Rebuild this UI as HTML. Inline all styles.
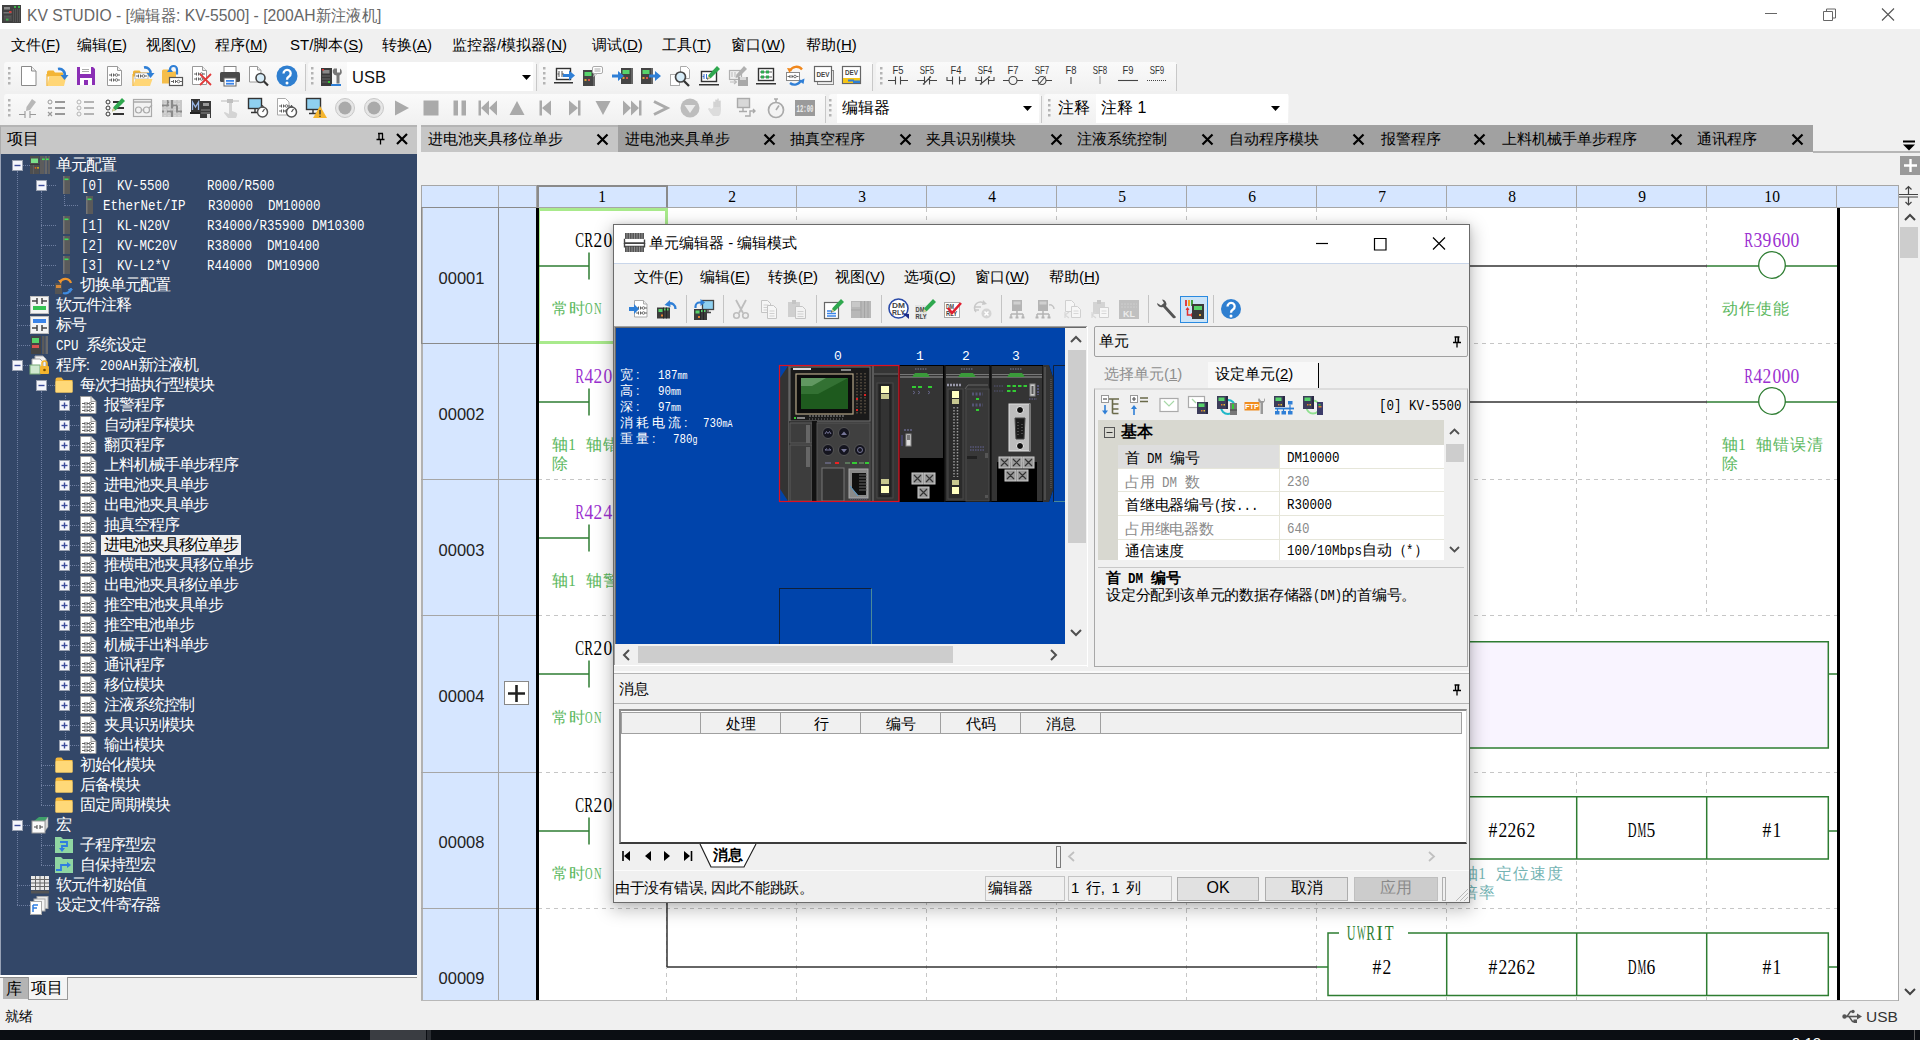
<!DOCTYPE html>
<html><head><meta charset="utf-8"><title>KV STUDIO</title><style>
*{box-sizing:border-box;margin:0;padding:0}
html,body{width:1920px;height:1040px;overflow:hidden;background:#f0f0f0;font-family:"Liberation Sans",sans-serif;font-size:15px;color:#000}
div,svg{position:absolute}
svg{overflow:visible}
.t{white-space:nowrap;line-height:1}
.s{font-family:"Liberation Serif",serif}
.m{font-family:"Liberation Mono",monospace}
u{text-decoration:underline;text-underline-offset:1px}
</style></head><body>
<!-- g_frame -->
<div style="left:0px;top:0px;width:1920px;height:29px;background:#fff"></div>
<svg style="left:2px;top:5px;" width="19" height="18" viewBox="0 0 19 18" preserveAspectRatio="none"><rect x="0" y="0" width="19" height="18" fill="#404040"/><rect x="2" y="2" width="6" height="2.500" fill="#8a8a8a"/><rect x="12" y="1" width="2" height="2" fill="#3cb04a"/><rect x="16" y="1" width="2" height="2" fill="#3cb04a"/><rect x="1.500" y="7" width="8" height="1.500" fill="#777"/><rect x="7" y="6" width="2.500" height="2" fill="#d04040"/><path d="M11.500 4v13M13.500 4v13M15.500 4v13M17.500 4v13" stroke="#555" stroke-width="1"/><rect x="2" y="10" width="8" height="6" fill="#4c4c4c"/><rect x="4" y="13.500" width="2.500" height="2" fill="#3cb04a"/><path d="M2 11.500h7M2 13h7" stroke="#5c5c5c" stroke-width="0.800"/></svg>
<div class="t" style="left:27px;top:7px;font-size:16.4px;color:#666;transform:scaleX(.958);transform-origin:0 0">KV STUDIO - [编辑器: KV-5500] - [200AH新注液机]</div>
<svg style="left:1764px;top:8px;" width="140" height="14" viewBox="0 0 140 14" preserveAspectRatio="none"><path d="M1 5.5h12" stroke="#666" stroke-width="1" fill="none"/><path d="M59.5 3.5h9v9h-9z M62.500 3.5v-2.500h9v9h-2.500" stroke="#666" stroke-width="1" fill="none"/><path d="M118 0.500l12 12M130 0.500l-12 12" stroke="#555" stroke-width="1.100" fill="none"/></svg>
<div class="t" style="left:11px;top:37px;font-size:15px">文件(<u>F</u>)</div>
<div class="t" style="left:77px;top:37px;font-size:15px">编辑(<u>E</u>)</div>
<div class="t" style="left:146px;top:37px;font-size:15px">视图(<u>V</u>)</div>
<div class="t" style="left:215px;top:37px;font-size:15px">程序(<u>M</u>)</div>
<div class="t" style="left:290px;top:37px;font-size:15px">ST/脚本(<u>S</u>)</div>
<div class="t" style="left:382px;top:37px;font-size:15px">转换(<u>A</u>)</div>
<div class="t" style="left:452px;top:37px;font-size:15px">监控器/模拟器(<u>N</u>)</div>
<div class="t" style="left:592px;top:37px;font-size:15px">调试(<u>D</u>)</div>
<div class="t" style="left:662px;top:37px;font-size:15px">工具(<u>T</u>)</div>
<div class="t" style="left:731px;top:37px;font-size:15px">窗口(<u>W</u>)</div>
<div class="t" style="left:806px;top:37px;font-size:15px">帮助(<u>H</u>)</div>
<div style="left:4px;top:62px;width:302px;height:29px;background:linear-gradient(#fafafa,#f1f1f1);border-radius:3px;"></div>
<div style="left:308px;top:62px;width:228px;height:29px;background:linear-gradient(#fafafa,#f1f1f1);border-radius:3px;"></div>
<div style="left:539px;top:62px;width:334px;height:29px;background:linear-gradient(#fafafa,#f1f1f1);border-radius:3px;"></div>
<div style="left:876px;top:62px;width:301px;height:29px;background:linear-gradient(#fafafa,#f1f1f1);border-radius:3px;"></div>
<div style="left:4px;top:94px;width:822px;height:29px;background:linear-gradient(#fafafa,#f1f1f1);border-radius:3px;"></div>
<div style="left:829px;top:94px;width:212px;height:29px;background:linear-gradient(#fafafa,#f1f1f1);border-radius:3px;"></div>
<div style="left:1044px;top:94px;width:245px;height:29px;background:linear-gradient(#fafafa,#f1f1f1);border-radius:3px;"></div>
<div style="left:0px;top:125px;width:417px;height:29px;background:#c7c7c7;border-top:2px solid #b4b4b4;border-left:1px solid #acacac"></div>
<div class="t" style="left:7px;top:131px;font-size:16px">项目</div>
<svg style="left:374px;top:132px;" width="36" height="14" viewBox="0 0 36 14" preserveAspectRatio="none"><path d="M4 1.500h5M5 1.500v6M8.500 1.500v6M2.500 7.500h8M6.500 7.500v5" stroke="#000" stroke-width="1.300" fill="none"/><path d="M23 2l10 10M33 2l-10 10" stroke="#000" stroke-width="2.200" fill="none"/></svg>
<div style="left:0px;top:154px;width:417px;height:821px;background:#334768;border-left:1px solid #98a2b6;"></div>
<div style="left:0px;top:975px;width:417px;height:2px;background:#fff"></div>
<div style="left:0px;top:977px;width:417px;height:1px;background:#8c8c8c"></div>
<div style="left:3px;top:978px;width:25px;height:21px;background:#b4b4b4"></div>
<div class="t" style="left:6px;top:981px;font-size:16px">库</div>
<div style="left:28px;top:977px;width:40px;height:23px;background:#f4f4f4;border:1px solid #999;border-top:none"></div>
<div class="t" style="left:31px;top:980px;font-size:16px">项目</div>
<div class="t" style="left:5px;top:1009px;font-size:14px">就绪</div>
<div class="t" style="left:1866px;top:1009px;font-size:15.5px;color:#333">USB</div>
<svg style="left:1842px;top:1009px;" width="20" height="15" viewBox="0 0 20 15" preserveAspectRatio="none"><path d="M2 7.500h14" stroke="#555" stroke-width="1.600" fill="none"/><path d="M15 4.500l5 3-5 3z" fill="#555"/><circle cx="2.500" cy="7.500" r="2.200" fill="#555"/><path d="M5 7.500l3.500-5h2M7 7.500l3.500 5h2" stroke="#555" stroke-width="1.400" fill="none"/><circle cx="11" cy="2.500" r="1.700" fill="#555"/><rect x="11.500" y="10.500" width="3.500" height="3.500" fill="#555"/></svg>
<div style="left:0px;top:1030px;width:1920px;height:10px;background:#0b0e13"></div>
<div style="left:370px;top:1030px;width:56px;height:10px;background:#3a3d42"></div>
<div style="left:427px;top:1030px;width:4px;height:10px;background:#2a2d32"></div>
<div class="t" style="left:1792px;top:1035px;font-size:15px;color:#fff">9:12</div>
<div style="left:1914px;top:1030px;width:1px;height:10px;background:#5a5a5a"></div>
<div style="left:421px;top:125px;width:1392px;height:27px;background:#a1a1a1"></div>
<div style="left:421px;top:125px;width:197px;height:27px;background:#c6c6c6;border-top:2px solid #b4b4b4"></div>
<div style="left:1813px;top:151px;width:107px;height:2px;background:#b6b6b6"></div>
<div class="t" style="left:428px;top:131px;font-size:15px">进电池夹具移位单步</div>
<svg style="left:596px;top:133px;" width="13" height="13" viewBox="0 0 13 13" preserveAspectRatio="none"><path d="M1.500 1.500l10 10M11.500 1.500l-10 10" stroke="#000" stroke-width="2.200" fill="none"/></svg>
<div class="t" style="left:625px;top:131px;font-size:15px">进电池夹具单步</div>
<svg style="left:763px;top:133px;" width="13" height="13" viewBox="0 0 13 13" preserveAspectRatio="none"><path d="M1.500 1.500l10 10M11.500 1.500l-10 10" stroke="#000" stroke-width="2.200" fill="none"/></svg>
<div class="t" style="left:790px;top:131px;font-size:15px">抽真空程序</div>
<svg style="left:899px;top:133px;" width="13" height="13" viewBox="0 0 13 13" preserveAspectRatio="none"><path d="M1.500 1.500l10 10M11.500 1.500l-10 10" stroke="#000" stroke-width="2.200" fill="none"/></svg>
<div class="t" style="left:926px;top:131px;font-size:15px">夹具识别模块</div>
<svg style="left:1050px;top:133px;" width="13" height="13" viewBox="0 0 13 13" preserveAspectRatio="none"><path d="M1.500 1.500l10 10M11.500 1.500l-10 10" stroke="#000" stroke-width="2.200" fill="none"/></svg>
<div class="t" style="left:1077px;top:131px;font-size:15px">注液系统控制</div>
<svg style="left:1201px;top:133px;" width="13" height="13" viewBox="0 0 13 13" preserveAspectRatio="none"><path d="M1.500 1.500l10 10M11.500 1.500l-10 10" stroke="#000" stroke-width="2.200" fill="none"/></svg>
<div class="t" style="left:1229px;top:131px;font-size:15px">自动程序模块</div>
<svg style="left:1352px;top:133px;" width="13" height="13" viewBox="0 0 13 13" preserveAspectRatio="none"><path d="M1.500 1.500l10 10M11.500 1.500l-10 10" stroke="#000" stroke-width="2.200" fill="none"/></svg>
<div class="t" style="left:1381px;top:131px;font-size:15px">报警程序</div>
<svg style="left:1473px;top:133px;" width="13" height="13" viewBox="0 0 13 13" preserveAspectRatio="none"><path d="M1.500 1.500l10 10M11.500 1.500l-10 10" stroke="#000" stroke-width="2.200" fill="none"/></svg>
<div class="t" style="left:1502px;top:131px;font-size:15px">上料机械手单步程序</div>
<svg style="left:1670px;top:133px;" width="13" height="13" viewBox="0 0 13 13" preserveAspectRatio="none"><path d="M1.500 1.500l10 10M11.500 1.500l-10 10" stroke="#000" stroke-width="2.200" fill="none"/></svg>
<div class="t" style="left:1697px;top:131px;font-size:15px">通讯程序</div>
<svg style="left:1791px;top:133px;" width="13" height="13" viewBox="0 0 13 13" preserveAspectRatio="none"><path d="M1.500 1.500l10 10M11.500 1.500l-10 10" stroke="#000" stroke-width="2.200" fill="none"/></svg>
<svg style="left:1903px;top:140px;" width="13" height="12" viewBox="0 0 13 12" preserveAspectRatio="none"><path d="M0 1.500h12" stroke="#000" stroke-width="2"/><path d="M0 4.500h12l-6 6z" fill="#000"/></svg>
<!-- g_tree -->
<div style="left:17px;top:171px;width:1px;height:734px;border-left:1px dotted #6e7ea0"></div>
<div style="left:41px;top:191px;width:1px;height:94px;border-left:1px dotted #6e7ea0"></div>
<div style="left:64px;top:195px;width:1px;height:11px;border-left:1px dotted #6e7ea0"></div>
<div style="left:41px;top:391px;width:1px;height:414px;border-left:1px dotted #6e7ea0"></div>
<div style="left:65px;top:395px;width:1px;height:350px;border-left:1px dotted #6e7ea0"></div>
<div style="left:41px;top:831px;width:1px;height:34px;border-left:1px dotted #6e7ea0"></div>
<div style="left:17px;top:305px;width:13px;height:1px;border-top:1px dotted #6e7ea0"></div>
<div style="left:17px;top:325px;width:13px;height:1px;border-top:1px dotted #6e7ea0"></div>
<div style="left:17px;top:345px;width:13px;height:1px;border-top:1px dotted #6e7ea0"></div>
<div style="left:17px;top:885px;width:13px;height:1px;border-top:1px dotted #6e7ea0"></div>
<div style="left:17px;top:905px;width:13px;height:1px;border-top:1px dotted #6e7ea0"></div>
<div style="left:22px;top:165px;width:8px;height:1px;border-top:1px dotted #6e7ea0"></div>
<div style="left:22px;top:365px;width:8px;height:1px;border-top:1px dotted #6e7ea0"></div>
<div style="left:22px;top:825px;width:8px;height:1px;border-top:1px dotted #6e7ea0"></div>
<div style="left:41px;top:225px;width:15px;height:1px;border-top:1px dotted #6e7ea0"></div>
<div style="left:41px;top:245px;width:15px;height:1px;border-top:1px dotted #6e7ea0"></div>
<div style="left:41px;top:265px;width:15px;height:1px;border-top:1px dotted #6e7ea0"></div>
<div style="left:46px;top:185px;width:10px;height:1px;border-top:1px dotted #6e7ea0"></div>
<div style="left:64px;top:205px;width:14px;height:1px;border-top:1px dotted #6e7ea0"></div>
<div style="left:41px;top:285px;width:13px;height:1px;border-top:1px dotted #6e7ea0"></div>
<div style="left:46px;top:385px;width:9px;height:1px;border-top:1px dotted #6e7ea0"></div>
<div style="left:41px;top:765px;width:13px;height:1px;border-top:1px dotted #6e7ea0"></div>
<div style="left:41px;top:785px;width:13px;height:1px;border-top:1px dotted #6e7ea0"></div>
<div style="left:41px;top:805px;width:13px;height:1px;border-top:1px dotted #6e7ea0"></div>
<div style="left:41px;top:845px;width:13px;height:1px;border-top:1px dotted #6e7ea0"></div>
<div style="left:41px;top:865px;width:13px;height:1px;border-top:1px dotted #6e7ea0"></div>
<div style="left:70px;top:405px;width:9px;height:1px;border-top:1px dotted #6e7ea0"></div>
<div style="left:70px;top:425px;width:9px;height:1px;border-top:1px dotted #6e7ea0"></div>
<div style="left:70px;top:445px;width:9px;height:1px;border-top:1px dotted #6e7ea0"></div>
<div style="left:70px;top:465px;width:9px;height:1px;border-top:1px dotted #6e7ea0"></div>
<div style="left:70px;top:485px;width:9px;height:1px;border-top:1px dotted #6e7ea0"></div>
<div style="left:70px;top:505px;width:9px;height:1px;border-top:1px dotted #6e7ea0"></div>
<div style="left:70px;top:525px;width:9px;height:1px;border-top:1px dotted #6e7ea0"></div>
<div style="left:70px;top:545px;width:9px;height:1px;border-top:1px dotted #6e7ea0"></div>
<div style="left:70px;top:565px;width:9px;height:1px;border-top:1px dotted #6e7ea0"></div>
<div style="left:70px;top:585px;width:9px;height:1px;border-top:1px dotted #6e7ea0"></div>
<div style="left:70px;top:605px;width:9px;height:1px;border-top:1px dotted #6e7ea0"></div>
<div style="left:70px;top:625px;width:9px;height:1px;border-top:1px dotted #6e7ea0"></div>
<div style="left:70px;top:645px;width:9px;height:1px;border-top:1px dotted #6e7ea0"></div>
<div style="left:70px;top:665px;width:9px;height:1px;border-top:1px dotted #6e7ea0"></div>
<div style="left:70px;top:685px;width:9px;height:1px;border-top:1px dotted #6e7ea0"></div>
<div style="left:70px;top:705px;width:9px;height:1px;border-top:1px dotted #6e7ea0"></div>
<div style="left:70px;top:725px;width:9px;height:1px;border-top:1px dotted #6e7ea0"></div>
<div style="left:70px;top:745px;width:9px;height:1px;border-top:1px dotted #6e7ea0"></div>
<svg style="left:11.5px;top:160px;" width="11" height="11" viewBox="0 0 11 11" preserveAspectRatio="none"><rect x="0.500" y="0.500" width="10" height="10" fill="#f4f6fb" stroke="#98a0b0"/><path d="M2.500 5.500h6" stroke="#3a4a9a" stroke-width="1.400"/></svg>
<svg style="left:30px;top:156px;" width="20" height="18" viewBox="0 0 20 18" preserveAspectRatio="none"><rect x="0" y="0" width="9.500" height="18" fill="#4e4e4e"/><rect x="1" y="2.500" width="7" height="4.500" fill="#7be08a"/><path d="M0 8.500h9.500" stroke="#3a3a3a" stroke-width="1"/><path d="M3.500 9v9" stroke="#5e5e5e" stroke-width="1"/><circle cx="5.500" cy="11.800" r=".900" fill="#e8601c"/><circle cx="8" cy="11.800" r=".900" fill="#e8c420"/><rect x="10" y="0" width="4" height="18" fill="#5c5c5c"/><rect x="14.500" y="0" width="2.500" height="18" fill="#686868"/><rect x="17.500" y="0" width="2.500" height="18" fill="#5e5e5e"/><rect x="12" y="2.500" width="2.800" height="1.600" fill="#3fe05a"/><rect x="16" y="2.500" width="2.800" height="1.600" fill="#3fe05a"/></svg>
<div class="t" style="left:56px;top:156.7px;font-size:15.5px;color:#fff;letter-spacing:-1.1px">单元配置</div>
<svg style="left:35.5px;top:180px;" width="11" height="11" viewBox="0 0 11 11" preserveAspectRatio="none"><rect x="0.500" y="0.500" width="10" height="10" fill="#f4f6fb" stroke="#98a0b0"/><path d="M2.500 5.500h6" stroke="#3a4a9a" stroke-width="1.400"/></svg>
<svg style="left:63px;top:176px;" width="7" height="18" viewBox="0 0 7 18" preserveAspectRatio="none"><rect x="0" y="0" width="7" height="18" fill="#5a5a5a"/><rect x="0" y="0" width="1.500" height="18" fill="#767676"/><rect x="1.500" y="2.500" width="4" height="1.600" fill="#3fdc5a"/></svg>
<div class="t m" style="left:81px;top:178.5px;font-size:15px;color:#fff;transform:scaleX(.8333);transform-origin:0 0;letter-spacing:0">[0]</div>
<div class="t m" style="left:117px;top:178.5px;font-size:15px;color:#fff;transform:scaleX(.8333);transform-origin:0 0;letter-spacing:0">KV-5500</div>
<div class="t m" style="left:207px;top:178.5px;font-size:15px;color:#fff;transform:scaleX(.8333);transform-origin:0 0;letter-spacing:0">R000/R500</div>
<svg style="left:86px;top:196px;" width="7" height="18" viewBox="0 0 7 18" preserveAspectRatio="none"><rect x="0" y="0" width="7" height="18" fill="#5a5a5a"/><rect x="0" y="0" width="1.500" height="18" fill="#767676"/><rect x="1.500" y="2.500" width="4" height="1.600" fill="#3fdc5a"/></svg>
<div class="t m" style="left:103px;top:198.5px;font-size:15px;color:#fff;transform:scaleX(.8333);transform-origin:0 0;letter-spacing:0">EtherNet/IP</div>
<div class="t m" style="left:208px;top:198.5px;font-size:15px;color:#fff;transform:scaleX(.8333);transform-origin:0 0;letter-spacing:0">R30000</div>
<div class="t m" style="left:268px;top:198.5px;font-size:15px;color:#fff;transform:scaleX(.8333);transform-origin:0 0;letter-spacing:0">DM10000</div>
<svg style="left:63px;top:216px;" width="7" height="18" viewBox="0 0 7 18" preserveAspectRatio="none"><rect x="0" y="0" width="7" height="18" fill="#5a5a5a"/><rect x="0" y="0" width="1.500" height="18" fill="#767676"/><rect x="1.500" y="2.500" width="4" height="1.600" fill="#3fdc5a"/></svg>
<div class="t m" style="left:81px;top:218.5px;font-size:15px;color:#fff;transform:scaleX(.8333);transform-origin:0 0;letter-spacing:0">[1]</div>
<div class="t m" style="left:117px;top:218.5px;font-size:15px;color:#fff;transform:scaleX(.8333);transform-origin:0 0;letter-spacing:0">KL-N20V</div>
<div class="t m" style="left:207px;top:218.5px;font-size:15px;color:#fff;transform:scaleX(.8333);transform-origin:0 0;letter-spacing:0">R34000/R35900</div>
<div class="t m" style="left:312px;top:218.5px;font-size:15px;color:#fff;transform:scaleX(.8333);transform-origin:0 0;letter-spacing:0">DM10300</div>
<svg style="left:63px;top:236px;" width="7" height="18" viewBox="0 0 7 18" preserveAspectRatio="none"><rect x="0" y="0" width="7" height="18" fill="#5a5a5a"/><rect x="0" y="0" width="1.500" height="18" fill="#767676"/><rect x="1.500" y="2.500" width="4" height="1.600" fill="#3fdc5a"/></svg>
<div class="t m" style="left:81px;top:238.5px;font-size:15px;color:#fff;transform:scaleX(.8333);transform-origin:0 0;letter-spacing:0">[2]</div>
<div class="t m" style="left:117px;top:238.5px;font-size:15px;color:#fff;transform:scaleX(.8333);transform-origin:0 0;letter-spacing:0">KV-MC20V</div>
<div class="t m" style="left:207px;top:238.5px;font-size:15px;color:#fff;transform:scaleX(.8333);transform-origin:0 0;letter-spacing:0">R38000</div>
<div class="t m" style="left:267px;top:238.5px;font-size:15px;color:#fff;transform:scaleX(.8333);transform-origin:0 0;letter-spacing:0">DM10400</div>
<svg style="left:63px;top:256px;" width="7" height="18" viewBox="0 0 7 18" preserveAspectRatio="none"><rect x="0" y="0" width="7" height="18" fill="#5a5a5a"/><rect x="0" y="0" width="1.500" height="18" fill="#767676"/><rect x="1.500" y="2.500" width="4" height="1.600" fill="#3fdc5a"/></svg>
<div class="t m" style="left:81px;top:258.5px;font-size:15px;color:#fff;transform:scaleX(.8333);transform-origin:0 0;letter-spacing:0">[3]</div>
<div class="t m" style="left:117px;top:258.5px;font-size:15px;color:#fff;transform:scaleX(.8333);transform-origin:0 0;letter-spacing:0">KV-L2*V</div>
<div class="t m" style="left:207px;top:258.5px;font-size:15px;color:#fff;transform:scaleX(.8333);transform-origin:0 0;letter-spacing:0">R44000</div>
<div class="t m" style="left:267px;top:258.5px;font-size:15px;color:#fff;transform:scaleX(.8333);transform-origin:0 0;letter-spacing:0">DM10900</div>
<svg style="left:54px;top:277px;" width="19" height="18" viewBox="0 0 19 18" preserveAspectRatio="none"><rect x="1" y="6" width="7" height="11" fill="#555"/><rect x="2" y="8" width="5" height="3" fill="#d88a3a"/><path d="M6 5a6 6 0 0 1 11 1" stroke="#f0962e" stroke-width="2.200" fill="none"/><path d="M17 11a6 6 0 0 1-8 5" stroke="#3f8be0" stroke-width="2.200" fill="none"/><path d="M4 3l4 0-1 4z" fill="#f0962e"/><path d="M19 12l-3 4-2-4z" fill="#3f8be0"/></svg>
<div class="t" style="left:80px;top:276.7px;font-size:15.5px;color:#fff;letter-spacing:-1.1px">切换单元配置</div>
<svg style="left:30px;top:296px;" width="19" height="18" viewBox="0 0 19 18" preserveAspectRatio="none"><rect x="0.500" y="0.500" width="18" height="17" fill="#f4f4f4" stroke="#bbb"/><path d="M2 5h5M12 5h5M7 2v6M12 2v6" stroke="#444" stroke-width="1.500"/><rect x="3" y="10" width="13" height="4" fill="#35c351"/></svg>
<div class="t" style="left:56px;top:296.7px;font-size:15.5px;color:#fff;letter-spacing:-1.1px">软元件注释</div>
<svg style="left:30px;top:316px;" width="19" height="18" viewBox="0 0 19 18" preserveAspectRatio="none"><rect x="0.500" y="0.500" width="18" height="17" fill="#f4f4f4" stroke="#bbb"/><rect x="3" y="3" width="13" height="4" fill="#3b84e8"/><path d="M2 12h5M12 12h5M7 9v6M12 9v6" stroke="#444" stroke-width="1.500"/></svg>
<div class="t" style="left:56px;top:316.7px;font-size:15.5px;color:#fff;letter-spacing:-1.1px">标号</div>
<svg style="left:31px;top:336px;" width="17" height="18" viewBox="0 0 17 18" preserveAspectRatio="none"><rect x="0" y="0" width="10" height="18" fill="#444"/><rect x="1" y="2" width="7" height="5" fill="#57d36b"/><rect x="1" y="9" width="7" height="3" fill="#d9534f"/><rect x="11" y="0" width="2.500" height="18" fill="#5a5a5a"/><rect x="14.500" y="0" width="2.500" height="18" fill="#6a6a6a"/></svg>
<div class="t m" style="left:56px;top:338.5px;font-size:15px;color:#fff;transform:scaleX(.8333);transform-origin:0 0;letter-spacing:0">CPU</div>
<div class="t" style="left:86px;top:336.7px;font-size:15.5px;color:#fff;letter-spacing:-1.1px">系统设定</div>
<svg style="left:11.5px;top:360px;" width="11" height="11" viewBox="0 0 11 11" preserveAspectRatio="none"><rect x="0.500" y="0.500" width="10" height="10" fill="#f4f6fb" stroke="#98a0b0"/><path d="M2.500 5.500h6" stroke="#3a4a9a" stroke-width="1.400"/></svg>
<svg style="left:30px;top:355px;" width="20" height="20" viewBox="0 0 20 20" preserveAspectRatio="none"><path d="M5 1h8l3 3v11h-11z" fill="#f2f2f2" stroke="#aaa"/><path d="M2 4h8l3 3v11h-11z" fill="#fff" stroke="#aaa"/><rect x="0" y="10" width="10" height="9" fill="#cfe8cf" stroke="#7a7"/><rect x="10" y="11" width="9" height="8" rx="1" fill="#f5b52e"/><path d="M12 11v-2.500a2.500 2.500 0 0 1 5 0v2.500" stroke="#f5b52e" stroke-width="1.600" fill="none"/><circle cx="14.500" cy="15" r="1.300" fill="#7a5200"/></svg>
<div class="t" style="left:56px;top:356.7px;font-size:15.5px;color:#fff;letter-spacing:-1.1px">程序:</div>
<div class="t m" style="left:100px;top:358.5px;font-size:15px;color:#fff;transform:scaleX(.8333);transform-origin:0 0;letter-spacing:0">200AH</div>
<div class="t" style="left:138px;top:356.7px;font-size:15.5px;color:#fff;letter-spacing:-1.1px">新注液机</div>
<svg style="left:35.5px;top:380px;" width="11" height="11" viewBox="0 0 11 11" preserveAspectRatio="none"><rect x="0.500" y="0.500" width="10" height="10" fill="#f4f6fb" stroke="#98a0b0"/><path d="M2.500 5.500h6" stroke="#3a4a9a" stroke-width="1.400"/></svg>
<svg style="left:55px;top:377px;" width="18" height="16" viewBox="0 0 18 16" preserveAspectRatio="none"><path d="M0.500 2.500q0-2 2-2h4l2 2.500h9v12.500h-17z" fill="#f5b93d"/><rect x="0.500" y="4" width="17" height="11.500" rx="1" fill="#ffd978"/></svg>
<div class="t" style="left:80px;top:376.7px;font-size:15.5px;color:#fff;letter-spacing:-1.1px">每次扫描执行型模块</div>
<svg style="left:58.5px;top:400px;" width="11" height="11" viewBox="0 0 11 11" preserveAspectRatio="none"><rect x="0.500" y="0.500" width="10" height="10" fill="#f4f6fb" stroke="#98a0b0"/><path d="M2.500 5.500h6" stroke="#3a4a9a" stroke-width="1.400"/><path d="M5.500 2.500v6" stroke="#3a4a9a" stroke-width="1.400"/></svg>
<svg style="left:80px;top:396px;" width="17" height="18" viewBox="0 0 17 18" preserveAspectRatio="none"><path d="M0.500 0.500h10.500l5 5v12h-15.500z" fill="#fff" stroke="#9a9a9a"/><path d="M11 0.500v5h5" fill="#e8e8e8" stroke="#9a9a9a"/><path d="M2 7.500h3M7 7.500h2.500M11 7.500h3M2 11h3M7 11h2.500M11 11h3M2 14.500h3M7 14.500h2.500M11 14.500h3M5 6v3M7 6v3M5 9.500v3M7 9.500v3M5 13v3M7 13v3" stroke="#555" stroke-width="0.900" fill="none"/><circle cx="10.300" cy="7.500" r="1.200" fill="none" stroke="#555" stroke-width="0.800"/><circle cx="10.300" cy="11" r="1.200" fill="none" stroke="#555" stroke-width="0.800"/><circle cx="10.300" cy="14.500" r="1.200" fill="none" stroke="#555" stroke-width="0.800"/></svg>
<div class="t" style="left:104px;top:396.7px;font-size:15.5px;color:#fff;letter-spacing:-1.1px">报警程序</div>
<svg style="left:58.5px;top:420px;" width="11" height="11" viewBox="0 0 11 11" preserveAspectRatio="none"><rect x="0.500" y="0.500" width="10" height="10" fill="#f4f6fb" stroke="#98a0b0"/><path d="M2.500 5.500h6" stroke="#3a4a9a" stroke-width="1.400"/><path d="M5.500 2.500v6" stroke="#3a4a9a" stroke-width="1.400"/></svg>
<svg style="left:80px;top:416px;" width="17" height="18" viewBox="0 0 17 18" preserveAspectRatio="none"><path d="M0.500 0.500h10.500l5 5v12h-15.500z" fill="#fff" stroke="#9a9a9a"/><path d="M11 0.500v5h5" fill="#e8e8e8" stroke="#9a9a9a"/><path d="M2 7.500h3M7 7.500h2.500M11 7.500h3M2 11h3M7 11h2.500M11 11h3M2 14.500h3M7 14.500h2.500M11 14.500h3M5 6v3M7 6v3M5 9.500v3M7 9.500v3M5 13v3M7 13v3" stroke="#555" stroke-width="0.900" fill="none"/><circle cx="10.300" cy="7.500" r="1.200" fill="none" stroke="#555" stroke-width="0.800"/><circle cx="10.300" cy="11" r="1.200" fill="none" stroke="#555" stroke-width="0.800"/><circle cx="10.300" cy="14.500" r="1.200" fill="none" stroke="#555" stroke-width="0.800"/></svg>
<div class="t" style="left:104px;top:416.7px;font-size:15.5px;color:#fff;letter-spacing:-1.1px">自动程序模块</div>
<svg style="left:58.5px;top:440px;" width="11" height="11" viewBox="0 0 11 11" preserveAspectRatio="none"><rect x="0.500" y="0.500" width="10" height="10" fill="#f4f6fb" stroke="#98a0b0"/><path d="M2.500 5.500h6" stroke="#3a4a9a" stroke-width="1.400"/><path d="M5.500 2.500v6" stroke="#3a4a9a" stroke-width="1.400"/></svg>
<svg style="left:80px;top:436px;" width="17" height="18" viewBox="0 0 17 18" preserveAspectRatio="none"><path d="M0.500 0.500h10.500l5 5v12h-15.500z" fill="#fff" stroke="#9a9a9a"/><path d="M11 0.500v5h5" fill="#e8e8e8" stroke="#9a9a9a"/><path d="M2 7.500h3M7 7.500h2.500M11 7.500h3M2 11h3M7 11h2.500M11 11h3M2 14.500h3M7 14.500h2.500M11 14.500h3M5 6v3M7 6v3M5 9.500v3M7 9.500v3M5 13v3M7 13v3" stroke="#555" stroke-width="0.900" fill="none"/><circle cx="10.300" cy="7.500" r="1.200" fill="none" stroke="#555" stroke-width="0.800"/><circle cx="10.300" cy="11" r="1.200" fill="none" stroke="#555" stroke-width="0.800"/><circle cx="10.300" cy="14.500" r="1.200" fill="none" stroke="#555" stroke-width="0.800"/></svg>
<div class="t" style="left:104px;top:436.7px;font-size:15.5px;color:#fff;letter-spacing:-1.1px">翻页程序</div>
<svg style="left:58.5px;top:460px;" width="11" height="11" viewBox="0 0 11 11" preserveAspectRatio="none"><rect x="0.500" y="0.500" width="10" height="10" fill="#f4f6fb" stroke="#98a0b0"/><path d="M2.500 5.500h6" stroke="#3a4a9a" stroke-width="1.400"/><path d="M5.500 2.500v6" stroke="#3a4a9a" stroke-width="1.400"/></svg>
<svg style="left:80px;top:456px;" width="17" height="18" viewBox="0 0 17 18" preserveAspectRatio="none"><path d="M0.500 0.500h10.500l5 5v12h-15.500z" fill="#fff" stroke="#9a9a9a"/><path d="M11 0.500v5h5" fill="#e8e8e8" stroke="#9a9a9a"/><path d="M2 7.500h3M7 7.500h2.500M11 7.500h3M2 11h3M7 11h2.500M11 11h3M2 14.500h3M7 14.500h2.500M11 14.500h3M5 6v3M7 6v3M5 9.500v3M7 9.500v3M5 13v3M7 13v3" stroke="#555" stroke-width="0.900" fill="none"/><circle cx="10.300" cy="7.500" r="1.200" fill="none" stroke="#555" stroke-width="0.800"/><circle cx="10.300" cy="11" r="1.200" fill="none" stroke="#555" stroke-width="0.800"/><circle cx="10.300" cy="14.500" r="1.200" fill="none" stroke="#555" stroke-width="0.800"/></svg>
<div class="t" style="left:104px;top:456.7px;font-size:15.5px;color:#fff;letter-spacing:-1.1px">上料机械手单步程序</div>
<svg style="left:58.5px;top:480px;" width="11" height="11" viewBox="0 0 11 11" preserveAspectRatio="none"><rect x="0.500" y="0.500" width="10" height="10" fill="#f4f6fb" stroke="#98a0b0"/><path d="M2.500 5.500h6" stroke="#3a4a9a" stroke-width="1.400"/><path d="M5.500 2.500v6" stroke="#3a4a9a" stroke-width="1.400"/></svg>
<svg style="left:80px;top:476px;" width="17" height="18" viewBox="0 0 17 18" preserveAspectRatio="none"><path d="M0.500 0.500h10.500l5 5v12h-15.500z" fill="#fff" stroke="#9a9a9a"/><path d="M11 0.500v5h5" fill="#e8e8e8" stroke="#9a9a9a"/><path d="M2 7.500h3M7 7.500h2.500M11 7.500h3M2 11h3M7 11h2.500M11 11h3M2 14.500h3M7 14.500h2.500M11 14.500h3M5 6v3M7 6v3M5 9.500v3M7 9.500v3M5 13v3M7 13v3" stroke="#555" stroke-width="0.900" fill="none"/><circle cx="10.300" cy="7.500" r="1.200" fill="none" stroke="#555" stroke-width="0.800"/><circle cx="10.300" cy="11" r="1.200" fill="none" stroke="#555" stroke-width="0.800"/><circle cx="10.300" cy="14.500" r="1.200" fill="none" stroke="#555" stroke-width="0.800"/></svg>
<div class="t" style="left:104px;top:476.7px;font-size:15.5px;color:#fff;letter-spacing:-1.1px">进电池夹具单步</div>
<svg style="left:58.5px;top:500px;" width="11" height="11" viewBox="0 0 11 11" preserveAspectRatio="none"><rect x="0.500" y="0.500" width="10" height="10" fill="#f4f6fb" stroke="#98a0b0"/><path d="M2.500 5.500h6" stroke="#3a4a9a" stroke-width="1.400"/><path d="M5.500 2.500v6" stroke="#3a4a9a" stroke-width="1.400"/></svg>
<svg style="left:80px;top:496px;" width="17" height="18" viewBox="0 0 17 18" preserveAspectRatio="none"><path d="M0.500 0.500h10.500l5 5v12h-15.500z" fill="#fff" stroke="#9a9a9a"/><path d="M11 0.500v5h5" fill="#e8e8e8" stroke="#9a9a9a"/><path d="M2 7.500h3M7 7.500h2.500M11 7.500h3M2 11h3M7 11h2.500M11 11h3M2 14.500h3M7 14.500h2.500M11 14.500h3M5 6v3M7 6v3M5 9.500v3M7 9.500v3M5 13v3M7 13v3" stroke="#555" stroke-width="0.900" fill="none"/><circle cx="10.300" cy="7.500" r="1.200" fill="none" stroke="#555" stroke-width="0.800"/><circle cx="10.300" cy="11" r="1.200" fill="none" stroke="#555" stroke-width="0.800"/><circle cx="10.300" cy="14.500" r="1.200" fill="none" stroke="#555" stroke-width="0.800"/></svg>
<div class="t" style="left:104px;top:496.7px;font-size:15.5px;color:#fff;letter-spacing:-1.1px">出电池夹具单步</div>
<svg style="left:58.5px;top:520px;" width="11" height="11" viewBox="0 0 11 11" preserveAspectRatio="none"><rect x="0.500" y="0.500" width="10" height="10" fill="#f4f6fb" stroke="#98a0b0"/><path d="M2.500 5.500h6" stroke="#3a4a9a" stroke-width="1.400"/><path d="M5.500 2.500v6" stroke="#3a4a9a" stroke-width="1.400"/></svg>
<svg style="left:80px;top:516px;" width="17" height="18" viewBox="0 0 17 18" preserveAspectRatio="none"><path d="M0.500 0.500h10.500l5 5v12h-15.500z" fill="#fff" stroke="#9a9a9a"/><path d="M11 0.500v5h5" fill="#e8e8e8" stroke="#9a9a9a"/><path d="M2 7.500h3M7 7.500h2.500M11 7.500h3M2 11h3M7 11h2.500M11 11h3M2 14.500h3M7 14.500h2.500M11 14.500h3M5 6v3M7 6v3M5 9.500v3M7 9.500v3M5 13v3M7 13v3" stroke="#555" stroke-width="0.900" fill="none"/><circle cx="10.300" cy="7.500" r="1.200" fill="none" stroke="#555" stroke-width="0.800"/><circle cx="10.300" cy="11" r="1.200" fill="none" stroke="#555" stroke-width="0.800"/><circle cx="10.300" cy="14.500" r="1.200" fill="none" stroke="#555" stroke-width="0.800"/></svg>
<div class="t" style="left:104px;top:516.7px;font-size:15.5px;color:#fff;letter-spacing:-1.1px">抽真空程序</div>
<svg style="left:58.5px;top:540px;" width="11" height="11" viewBox="0 0 11 11" preserveAspectRatio="none"><rect x="0.500" y="0.500" width="10" height="10" fill="#f4f6fb" stroke="#98a0b0"/><path d="M2.500 5.500h6" stroke="#3a4a9a" stroke-width="1.400"/><path d="M5.500 2.500v6" stroke="#3a4a9a" stroke-width="1.400"/></svg>
<svg style="left:80px;top:536px;" width="17" height="18" viewBox="0 0 17 18" preserveAspectRatio="none"><path d="M0.500 0.500h10.500l5 5v12h-15.500z" fill="#fff" stroke="#9a9a9a"/><path d="M11 0.500v5h5" fill="#e8e8e8" stroke="#9a9a9a"/><path d="M2 7.500h3M7 7.500h2.500M11 7.500h3M2 11h3M7 11h2.500M11 11h3M2 14.500h3M7 14.500h2.500M11 14.500h3M5 6v3M7 6v3M5 9.500v3M7 9.500v3M5 13v3M7 13v3" stroke="#555" stroke-width="0.900" fill="none"/><circle cx="10.300" cy="7.500" r="1.200" fill="none" stroke="#555" stroke-width="0.800"/><circle cx="10.300" cy="11" r="1.200" fill="none" stroke="#555" stroke-width="0.800"/><circle cx="10.300" cy="14.500" r="1.200" fill="none" stroke="#555" stroke-width="0.800"/></svg>
<div style="left:101px;top:535px;width:140px;height:20px;background:#f0f0f0"></div>
<div class="t" style="left:104px;top:536.7px;font-size:15.5px;color:#000;letter-spacing:-1.1px">进电池夹具移位单步</div>
<svg style="left:58.5px;top:560px;" width="11" height="11" viewBox="0 0 11 11" preserveAspectRatio="none"><rect x="0.500" y="0.500" width="10" height="10" fill="#f4f6fb" stroke="#98a0b0"/><path d="M2.500 5.500h6" stroke="#3a4a9a" stroke-width="1.400"/><path d="M5.500 2.500v6" stroke="#3a4a9a" stroke-width="1.400"/></svg>
<svg style="left:80px;top:556px;" width="17" height="18" viewBox="0 0 17 18" preserveAspectRatio="none"><path d="M0.500 0.500h10.500l5 5v12h-15.500z" fill="#fff" stroke="#9a9a9a"/><path d="M11 0.500v5h5" fill="#e8e8e8" stroke="#9a9a9a"/><path d="M2 7.500h3M7 7.500h2.500M11 7.500h3M2 11h3M7 11h2.500M11 11h3M2 14.500h3M7 14.500h2.500M11 14.500h3M5 6v3M7 6v3M5 9.500v3M7 9.500v3M5 13v3M7 13v3" stroke="#555" stroke-width="0.900" fill="none"/><circle cx="10.300" cy="7.500" r="1.200" fill="none" stroke="#555" stroke-width="0.800"/><circle cx="10.300" cy="11" r="1.200" fill="none" stroke="#555" stroke-width="0.800"/><circle cx="10.300" cy="14.500" r="1.200" fill="none" stroke="#555" stroke-width="0.800"/></svg>
<div class="t" style="left:104px;top:556.7px;font-size:15.5px;color:#fff;letter-spacing:-1.1px">推横电池夹具移位单步</div>
<svg style="left:58.5px;top:580px;" width="11" height="11" viewBox="0 0 11 11" preserveAspectRatio="none"><rect x="0.500" y="0.500" width="10" height="10" fill="#f4f6fb" stroke="#98a0b0"/><path d="M2.500 5.500h6" stroke="#3a4a9a" stroke-width="1.400"/><path d="M5.500 2.500v6" stroke="#3a4a9a" stroke-width="1.400"/></svg>
<svg style="left:80px;top:576px;" width="17" height="18" viewBox="0 0 17 18" preserveAspectRatio="none"><path d="M0.500 0.500h10.500l5 5v12h-15.500z" fill="#fff" stroke="#9a9a9a"/><path d="M11 0.500v5h5" fill="#e8e8e8" stroke="#9a9a9a"/><path d="M2 7.500h3M7 7.500h2.500M11 7.500h3M2 11h3M7 11h2.500M11 11h3M2 14.500h3M7 14.500h2.500M11 14.500h3M5 6v3M7 6v3M5 9.500v3M7 9.500v3M5 13v3M7 13v3" stroke="#555" stroke-width="0.900" fill="none"/><circle cx="10.300" cy="7.500" r="1.200" fill="none" stroke="#555" stroke-width="0.800"/><circle cx="10.300" cy="11" r="1.200" fill="none" stroke="#555" stroke-width="0.800"/><circle cx="10.300" cy="14.500" r="1.200" fill="none" stroke="#555" stroke-width="0.800"/></svg>
<div class="t" style="left:104px;top:576.7px;font-size:15.5px;color:#fff;letter-spacing:-1.1px">出电池夹具移位单步</div>
<svg style="left:58.5px;top:600px;" width="11" height="11" viewBox="0 0 11 11" preserveAspectRatio="none"><rect x="0.500" y="0.500" width="10" height="10" fill="#f4f6fb" stroke="#98a0b0"/><path d="M2.500 5.500h6" stroke="#3a4a9a" stroke-width="1.400"/><path d="M5.500 2.500v6" stroke="#3a4a9a" stroke-width="1.400"/></svg>
<svg style="left:80px;top:596px;" width="17" height="18" viewBox="0 0 17 18" preserveAspectRatio="none"><path d="M0.500 0.500h10.500l5 5v12h-15.500z" fill="#fff" stroke="#9a9a9a"/><path d="M11 0.500v5h5" fill="#e8e8e8" stroke="#9a9a9a"/><path d="M2 7.500h3M7 7.500h2.500M11 7.500h3M2 11h3M7 11h2.500M11 11h3M2 14.500h3M7 14.500h2.500M11 14.500h3M5 6v3M7 6v3M5 9.500v3M7 9.500v3M5 13v3M7 13v3" stroke="#555" stroke-width="0.900" fill="none"/><circle cx="10.300" cy="7.500" r="1.200" fill="none" stroke="#555" stroke-width="0.800"/><circle cx="10.300" cy="11" r="1.200" fill="none" stroke="#555" stroke-width="0.800"/><circle cx="10.300" cy="14.500" r="1.200" fill="none" stroke="#555" stroke-width="0.800"/></svg>
<div class="t" style="left:104px;top:596.7px;font-size:15.5px;color:#fff;letter-spacing:-1.1px">推空电池夹具单步</div>
<svg style="left:58.5px;top:620px;" width="11" height="11" viewBox="0 0 11 11" preserveAspectRatio="none"><rect x="0.500" y="0.500" width="10" height="10" fill="#f4f6fb" stroke="#98a0b0"/><path d="M2.500 5.500h6" stroke="#3a4a9a" stroke-width="1.400"/><path d="M5.500 2.500v6" stroke="#3a4a9a" stroke-width="1.400"/></svg>
<svg style="left:80px;top:616px;" width="17" height="18" viewBox="0 0 17 18" preserveAspectRatio="none"><path d="M0.500 0.500h10.500l5 5v12h-15.500z" fill="#fff" stroke="#9a9a9a"/><path d="M11 0.500v5h5" fill="#e8e8e8" stroke="#9a9a9a"/><path d="M2 7.500h3M7 7.500h2.500M11 7.500h3M2 11h3M7 11h2.500M11 11h3M2 14.500h3M7 14.500h2.500M11 14.500h3M5 6v3M7 6v3M5 9.500v3M7 9.500v3M5 13v3M7 13v3" stroke="#555" stroke-width="0.900" fill="none"/><circle cx="10.300" cy="7.500" r="1.200" fill="none" stroke="#555" stroke-width="0.800"/><circle cx="10.300" cy="11" r="1.200" fill="none" stroke="#555" stroke-width="0.800"/><circle cx="10.300" cy="14.500" r="1.200" fill="none" stroke="#555" stroke-width="0.800"/></svg>
<div class="t" style="left:104px;top:616.7px;font-size:15.5px;color:#fff;letter-spacing:-1.1px">推空电池单步</div>
<svg style="left:58.5px;top:640px;" width="11" height="11" viewBox="0 0 11 11" preserveAspectRatio="none"><rect x="0.500" y="0.500" width="10" height="10" fill="#f4f6fb" stroke="#98a0b0"/><path d="M2.500 5.500h6" stroke="#3a4a9a" stroke-width="1.400"/><path d="M5.500 2.500v6" stroke="#3a4a9a" stroke-width="1.400"/></svg>
<svg style="left:80px;top:636px;" width="17" height="18" viewBox="0 0 17 18" preserveAspectRatio="none"><path d="M0.500 0.500h10.500l5 5v12h-15.500z" fill="#fff" stroke="#9a9a9a"/><path d="M11 0.500v5h5" fill="#e8e8e8" stroke="#9a9a9a"/><path d="M2 7.500h3M7 7.500h2.500M11 7.500h3M2 11h3M7 11h2.500M11 11h3M2 14.500h3M7 14.500h2.500M11 14.500h3M5 6v3M7 6v3M5 9.500v3M7 9.500v3M5 13v3M7 13v3" stroke="#555" stroke-width="0.900" fill="none"/><circle cx="10.300" cy="7.500" r="1.200" fill="none" stroke="#555" stroke-width="0.800"/><circle cx="10.300" cy="11" r="1.200" fill="none" stroke="#555" stroke-width="0.800"/><circle cx="10.300" cy="14.500" r="1.200" fill="none" stroke="#555" stroke-width="0.800"/></svg>
<div class="t" style="left:104px;top:636.7px;font-size:15.5px;color:#fff;letter-spacing:-1.1px">机械手出料单步</div>
<svg style="left:58.5px;top:660px;" width="11" height="11" viewBox="0 0 11 11" preserveAspectRatio="none"><rect x="0.500" y="0.500" width="10" height="10" fill="#f4f6fb" stroke="#98a0b0"/><path d="M2.500 5.500h6" stroke="#3a4a9a" stroke-width="1.400"/><path d="M5.500 2.500v6" stroke="#3a4a9a" stroke-width="1.400"/></svg>
<svg style="left:80px;top:656px;" width="17" height="18" viewBox="0 0 17 18" preserveAspectRatio="none"><path d="M0.500 0.500h10.500l5 5v12h-15.500z" fill="#fff" stroke="#9a9a9a"/><path d="M11 0.500v5h5" fill="#e8e8e8" stroke="#9a9a9a"/><path d="M2 7.500h3M7 7.500h2.500M11 7.500h3M2 11h3M7 11h2.500M11 11h3M2 14.500h3M7 14.500h2.500M11 14.500h3M5 6v3M7 6v3M5 9.500v3M7 9.500v3M5 13v3M7 13v3" stroke="#555" stroke-width="0.900" fill="none"/><circle cx="10.300" cy="7.500" r="1.200" fill="none" stroke="#555" stroke-width="0.800"/><circle cx="10.300" cy="11" r="1.200" fill="none" stroke="#555" stroke-width="0.800"/><circle cx="10.300" cy="14.500" r="1.200" fill="none" stroke="#555" stroke-width="0.800"/></svg>
<div class="t" style="left:104px;top:656.7px;font-size:15.5px;color:#fff;letter-spacing:-1.1px">通讯程序</div>
<svg style="left:58.5px;top:680px;" width="11" height="11" viewBox="0 0 11 11" preserveAspectRatio="none"><rect x="0.500" y="0.500" width="10" height="10" fill="#f4f6fb" stroke="#98a0b0"/><path d="M2.500 5.500h6" stroke="#3a4a9a" stroke-width="1.400"/><path d="M5.500 2.500v6" stroke="#3a4a9a" stroke-width="1.400"/></svg>
<svg style="left:80px;top:676px;" width="17" height="18" viewBox="0 0 17 18" preserveAspectRatio="none"><path d="M0.500 0.500h10.500l5 5v12h-15.500z" fill="#fff" stroke="#9a9a9a"/><path d="M11 0.500v5h5" fill="#e8e8e8" stroke="#9a9a9a"/><path d="M2 7.500h3M7 7.500h2.500M11 7.500h3M2 11h3M7 11h2.500M11 11h3M2 14.500h3M7 14.500h2.500M11 14.500h3M5 6v3M7 6v3M5 9.500v3M7 9.500v3M5 13v3M7 13v3" stroke="#555" stroke-width="0.900" fill="none"/><circle cx="10.300" cy="7.500" r="1.200" fill="none" stroke="#555" stroke-width="0.800"/><circle cx="10.300" cy="11" r="1.200" fill="none" stroke="#555" stroke-width="0.800"/><circle cx="10.300" cy="14.500" r="1.200" fill="none" stroke="#555" stroke-width="0.800"/></svg>
<div class="t" style="left:104px;top:676.7px;font-size:15.5px;color:#fff;letter-spacing:-1.1px">移位模块</div>
<svg style="left:58.5px;top:700px;" width="11" height="11" viewBox="0 0 11 11" preserveAspectRatio="none"><rect x="0.500" y="0.500" width="10" height="10" fill="#f4f6fb" stroke="#98a0b0"/><path d="M2.500 5.500h6" stroke="#3a4a9a" stroke-width="1.400"/><path d="M5.500 2.500v6" stroke="#3a4a9a" stroke-width="1.400"/></svg>
<svg style="left:80px;top:696px;" width="17" height="18" viewBox="0 0 17 18" preserveAspectRatio="none"><path d="M0.500 0.500h10.500l5 5v12h-15.500z" fill="#fff" stroke="#9a9a9a"/><path d="M11 0.500v5h5" fill="#e8e8e8" stroke="#9a9a9a"/><path d="M2 7.500h3M7 7.500h2.500M11 7.500h3M2 11h3M7 11h2.500M11 11h3M2 14.500h3M7 14.500h2.500M11 14.500h3M5 6v3M7 6v3M5 9.500v3M7 9.500v3M5 13v3M7 13v3" stroke="#555" stroke-width="0.900" fill="none"/><circle cx="10.300" cy="7.500" r="1.200" fill="none" stroke="#555" stroke-width="0.800"/><circle cx="10.300" cy="11" r="1.200" fill="none" stroke="#555" stroke-width="0.800"/><circle cx="10.300" cy="14.500" r="1.200" fill="none" stroke="#555" stroke-width="0.800"/></svg>
<div class="t" style="left:104px;top:696.7px;font-size:15.5px;color:#fff;letter-spacing:-1.1px">注液系统控制</div>
<svg style="left:58.5px;top:720px;" width="11" height="11" viewBox="0 0 11 11" preserveAspectRatio="none"><rect x="0.500" y="0.500" width="10" height="10" fill="#f4f6fb" stroke="#98a0b0"/><path d="M2.500 5.500h6" stroke="#3a4a9a" stroke-width="1.400"/><path d="M5.500 2.500v6" stroke="#3a4a9a" stroke-width="1.400"/></svg>
<svg style="left:80px;top:716px;" width="17" height="18" viewBox="0 0 17 18" preserveAspectRatio="none"><path d="M0.500 0.500h10.500l5 5v12h-15.500z" fill="#fff" stroke="#9a9a9a"/><path d="M11 0.500v5h5" fill="#e8e8e8" stroke="#9a9a9a"/><path d="M2 7.500h3M7 7.500h2.500M11 7.500h3M2 11h3M7 11h2.500M11 11h3M2 14.500h3M7 14.500h2.500M11 14.500h3M5 6v3M7 6v3M5 9.500v3M7 9.500v3M5 13v3M7 13v3" stroke="#555" stroke-width="0.900" fill="none"/><circle cx="10.300" cy="7.500" r="1.200" fill="none" stroke="#555" stroke-width="0.800"/><circle cx="10.300" cy="11" r="1.200" fill="none" stroke="#555" stroke-width="0.800"/><circle cx="10.300" cy="14.500" r="1.200" fill="none" stroke="#555" stroke-width="0.800"/></svg>
<div class="t" style="left:104px;top:716.7px;font-size:15.5px;color:#fff;letter-spacing:-1.1px">夹具识别模块</div>
<svg style="left:58.5px;top:740px;" width="11" height="11" viewBox="0 0 11 11" preserveAspectRatio="none"><rect x="0.500" y="0.500" width="10" height="10" fill="#f4f6fb" stroke="#98a0b0"/><path d="M2.500 5.500h6" stroke="#3a4a9a" stroke-width="1.400"/><path d="M5.500 2.500v6" stroke="#3a4a9a" stroke-width="1.400"/></svg>
<svg style="left:80px;top:736px;" width="17" height="18" viewBox="0 0 17 18" preserveAspectRatio="none"><path d="M0.500 0.500h10.500l5 5v12h-15.500z" fill="#fff" stroke="#9a9a9a"/><path d="M11 0.500v5h5" fill="#e8e8e8" stroke="#9a9a9a"/><path d="M2 7.500h3M7 7.500h2.500M11 7.500h3M2 11h3M7 11h2.500M11 11h3M2 14.500h3M7 14.500h2.500M11 14.500h3M5 6v3M7 6v3M5 9.500v3M7 9.500v3M5 13v3M7 13v3" stroke="#555" stroke-width="0.900" fill="none"/><circle cx="10.300" cy="7.500" r="1.200" fill="none" stroke="#555" stroke-width="0.800"/><circle cx="10.300" cy="11" r="1.200" fill="none" stroke="#555" stroke-width="0.800"/><circle cx="10.300" cy="14.500" r="1.200" fill="none" stroke="#555" stroke-width="0.800"/></svg>
<div class="t" style="left:104px;top:736.7px;font-size:15.5px;color:#fff;letter-spacing:-1.1px">输出模块</div>
<svg style="left:55px;top:757px;" width="18" height="16" viewBox="0 0 18 16" preserveAspectRatio="none"><path d="M0.500 2.500q0-2 2-2h4l2 2.500h9v12.500h-17z" fill="#f5b93d"/><rect x="0.500" y="4" width="17" height="11.500" rx="1" fill="#ffd978"/></svg>
<div class="t" style="left:80px;top:756.7px;font-size:15.5px;color:#fff;letter-spacing:-1.1px">初始化模块</div>
<svg style="left:55px;top:777px;" width="18" height="16" viewBox="0 0 18 16" preserveAspectRatio="none"><path d="M0.500 2.500q0-2 2-2h4l2 2.500h9v12.500h-17z" fill="#f5b93d"/><rect x="0.500" y="4" width="17" height="11.500" rx="1" fill="#ffd978"/></svg>
<div class="t" style="left:80px;top:776.7px;font-size:15.5px;color:#fff;letter-spacing:-1.1px">后备模块</div>
<svg style="left:55px;top:797px;" width="18" height="16" viewBox="0 0 18 16" preserveAspectRatio="none"><path d="M0.500 2.500q0-2 2-2h4l2 2.500h9v12.500h-17z" fill="#f5b93d"/><rect x="0.500" y="4" width="17" height="11.500" rx="1" fill="#ffd978"/></svg>
<div class="t" style="left:80px;top:796.7px;font-size:15.5px;color:#fff;letter-spacing:-1.1px">固定周期模块</div>
<svg style="left:11.5px;top:820px;" width="11" height="11" viewBox="0 0 11 11" preserveAspectRatio="none"><rect x="0.500" y="0.500" width="10" height="10" fill="#f4f6fb" stroke="#98a0b0"/><path d="M2.500 5.500h6" stroke="#3a4a9a" stroke-width="1.400"/></svg>
<svg style="left:31px;top:816px;" width="19" height="18" viewBox="0 0 19 18" preserveAspectRatio="none"><path d="M3 5l5-4h9l-3 4z" fill="#3fa06a"/><path d="M14 5l3-4v10l-3 4z" fill="#d8d8d8" stroke="#999" stroke-width="0.500"/><rect x="1" y="5" width="13" height="12" fill="#fafafa" stroke="#999"/><path d="M3 11h3M9 11h3M6 9v4M9 9v4" stroke="#444" stroke-width="1"/></svg>
<div class="t" style="left:56px;top:816.7px;font-size:15.5px;color:#fff;letter-spacing:-1.1px">宏</div>
<svg style="left:55px;top:836px;" width="18" height="17" viewBox="0 0 18 17" preserveAspectRatio="none"><path d="M0 1h6l2 2h10v14h-18z" fill="#8fd6a2"/><path d="M5 6h7v4h-5v4" stroke="#2f7de0" stroke-width="1.800" fill="none"/><path d="M4 12l3 4 3-4z" fill="#2f7de0"/></svg>
<div class="t" style="left:80px;top:836.7px;font-size:15.5px;color:#fff;letter-spacing:-1.1px">子程序型宏</div>
<svg style="left:55px;top:856px;" width="18" height="17" viewBox="0 0 18 17" preserveAspectRatio="none"><path d="M0 1h6l2 2h10v14h-18z" fill="#8fd6a2"/><path d="M1 14h5v-5h7" stroke="#2f7de0" stroke-width="1.800" fill="none"/><path d="M12 6l4 3-4 3z" fill="#2f7de0"/></svg>
<div class="t" style="left:80px;top:856.7px;font-size:15.5px;color:#fff;letter-spacing:-1.1px">自保持型宏</div>
<svg style="left:31px;top:876px;" width="18" height="18" viewBox="0 0 18 18" preserveAspectRatio="none"><rect x="0" y="0" width="18" height="14" fill="#e8e8e8"/><path d="M0 3.500h18M0 7h18M0 10.500h18M4.500 0v14M9 0v14M13.500 0v14" stroke="#666" stroke-width="1"/><rect x="0" y="14.500" width="18" height="3" fill="#555"/></svg>
<div class="t" style="left:56px;top:876.7px;font-size:15.5px;color:#fff;letter-spacing:-1.1px">软元件初始值</div>
<svg style="left:30px;top:896px;" width="20" height="19" viewBox="0 0 20 19" preserveAspectRatio="none"><rect x="7" y="0.500" width="11" height="12" fill="#e8e8e8" stroke="#aaa"/><rect x="4" y="3" width="11" height="12" fill="#f4f4f4" stroke="#aaa"/><rect x="0.500" y="5.500" width="11" height="13" fill="#fff" stroke="#aaa"/><path d="M3 9h5M3 9v7M3 12h4" stroke="#2f7de0" stroke-width="1.500" fill="none"/></svg>
<div class="t" style="left:56px;top:896.7px;font-size:15.5px;color:#fff;letter-spacing:-1.1px">设定文件寄存器</div>
<!-- g_ladder -->
<div style="left:538px;top:207px;width:1360px;height:793px;background:#fff"></div>
<div style="left:421px;top:185px;width:1478px;height:23px;background:#d6e6ff;border:1px solid #a6a6a6;border-width:1px 1px 1px 1px"></div>
<div style="left:421px;top:207px;width:116px;height:793px;background:#d6e6ff;border-left:2px solid #b2b2b2"></div>
<div style="left:498px;top:185px;width:1px;height:815px;background:#a6a6a6"></div>
<div style="left:536px;top:185px;width:1px;height:23px;background:#a6a6a6"></div>
<div style="left:666px;top:186px;width:1px;height:21px;background:#a6a6a6"></div>
<div style="left:796px;top:186px;width:1px;height:21px;background:#a6a6a6"></div>
<div style="left:926px;top:186px;width:1px;height:21px;background:#a6a6a6"></div>
<div style="left:1056px;top:186px;width:1px;height:21px;background:#a6a6a6"></div>
<div style="left:1186px;top:186px;width:1px;height:21px;background:#a6a6a6"></div>
<div style="left:1316px;top:186px;width:1px;height:21px;background:#a6a6a6"></div>
<div style="left:1446px;top:186px;width:1px;height:21px;background:#a6a6a6"></div>
<div style="left:1576px;top:186px;width:1px;height:21px;background:#a6a6a6"></div>
<div style="left:1706px;top:186px;width:1px;height:21px;background:#a6a6a6"></div>
<div style="left:1836px;top:186px;width:1px;height:21px;background:#a6a6a6"></div>
<div style="left:537px;top:185px;width:131px;height:23px;border:2px solid #8a8a8a;border-bottom:1px solid #a6a6a6"></div>
<div class="t s" style="left:452px;width:300px;text-align:center;top:189.2px;font-size:16.5px;color:#000"><span style="display:inline-flex;justify-content:center;width:8.25px"><span style="display:inline-block;transform:scaleX(0.940)">1</span></span></div>
<div class="t s" style="left:582px;width:300px;text-align:center;top:189.2px;font-size:16.5px;color:#000"><span style="display:inline-flex;justify-content:center;width:8.25px"><span style="display:inline-block;transform:scaleX(0.940)">2</span></span></div>
<div class="t s" style="left:712px;width:300px;text-align:center;top:189.2px;font-size:16.5px;color:#000"><span style="display:inline-flex;justify-content:center;width:8.25px"><span style="display:inline-block;transform:scaleX(0.940)">3</span></span></div>
<div class="t s" style="left:842px;width:300px;text-align:center;top:189.2px;font-size:16.5px;color:#000"><span style="display:inline-flex;justify-content:center;width:8.25px"><span style="display:inline-block;transform:scaleX(0.940)">4</span></span></div>
<div class="t s" style="left:972px;width:300px;text-align:center;top:189.2px;font-size:16.5px;color:#000"><span style="display:inline-flex;justify-content:center;width:8.25px"><span style="display:inline-block;transform:scaleX(0.940)">5</span></span></div>
<div class="t s" style="left:1102px;width:300px;text-align:center;top:189.2px;font-size:16.5px;color:#000"><span style="display:inline-flex;justify-content:center;width:8.25px"><span style="display:inline-block;transform:scaleX(0.940)">6</span></span></div>
<div class="t s" style="left:1232px;width:300px;text-align:center;top:189.2px;font-size:16.5px;color:#000"><span style="display:inline-flex;justify-content:center;width:8.25px"><span style="display:inline-block;transform:scaleX(0.940)">7</span></span></div>
<div class="t s" style="left:1362px;width:300px;text-align:center;top:189.2px;font-size:16.5px;color:#000"><span style="display:inline-flex;justify-content:center;width:8.25px"><span style="display:inline-block;transform:scaleX(0.940)">8</span></span></div>
<div class="t s" style="left:1492px;width:300px;text-align:center;top:189.2px;font-size:16.5px;color:#000"><span style="display:inline-flex;justify-content:center;width:8.25px"><span style="display:inline-block;transform:scaleX(0.940)">9</span></span></div>
<div class="t s" style="left:1622px;width:300px;text-align:center;top:189.2px;font-size:16.5px;color:#000"><span style="display:inline-flex;justify-content:center;width:8.25px"><span style="display:inline-block;transform:scaleX(0.940)">1</span></span><span style="display:inline-flex;justify-content:center;width:8.25px"><span style="display:inline-block;transform:scaleX(0.940)">0</span></span></div>
<div style="left:421px;top:343px;width:116px;height:1px;background:#a6a6a6"></div>
<div style="left:421px;top:479px;width:116px;height:1px;background:#a6a6a6"></div>
<div style="left:421px;top:615px;width:116px;height:1px;background:#a6a6a6"></div>
<div style="left:421px;top:772px;width:116px;height:1px;background:#a6a6a6"></div>
<div style="left:421px;top:908px;width:116px;height:1px;background:#a6a6a6"></div>
<div style="left:421px;top:1000px;width:1478px;height:1px;background:#b8b8b8"></div>
<div style="left:1898px;top:207px;width:1px;height:794px;background:#a6a6a6"></div>
<div style="left:666px;top:208px;width:1px;height:407px;background:repeating-linear-gradient(180deg,#c6c6c6 0 4px,transparent 4px 8px)"></div>
<div style="left:666px;top:773px;width:1px;height:227px;background:repeating-linear-gradient(180deg,#c6c6c6 0 4px,transparent 4px 8px)"></div>
<div style="left:796px;top:208px;width:1px;height:407px;background:repeating-linear-gradient(180deg,#c6c6c6 0 4px,transparent 4px 8px)"></div>
<div style="left:796px;top:773px;width:1px;height:227px;background:repeating-linear-gradient(180deg,#c6c6c6 0 4px,transparent 4px 8px)"></div>
<div style="left:926px;top:208px;width:1px;height:407px;background:repeating-linear-gradient(180deg,#c6c6c6 0 4px,transparent 4px 8px)"></div>
<div style="left:926px;top:773px;width:1px;height:227px;background:repeating-linear-gradient(180deg,#c6c6c6 0 4px,transparent 4px 8px)"></div>
<div style="left:1056px;top:208px;width:1px;height:407px;background:repeating-linear-gradient(180deg,#c6c6c6 0 4px,transparent 4px 8px)"></div>
<div style="left:1056px;top:773px;width:1px;height:227px;background:repeating-linear-gradient(180deg,#c6c6c6 0 4px,transparent 4px 8px)"></div>
<div style="left:1186px;top:208px;width:1px;height:407px;background:repeating-linear-gradient(180deg,#c6c6c6 0 4px,transparent 4px 8px)"></div>
<div style="left:1186px;top:773px;width:1px;height:227px;background:repeating-linear-gradient(180deg,#c6c6c6 0 4px,transparent 4px 8px)"></div>
<div style="left:1316px;top:208px;width:1px;height:407px;background:repeating-linear-gradient(180deg,#c6c6c6 0 4px,transparent 4px 8px)"></div>
<div style="left:1316px;top:773px;width:1px;height:227px;background:repeating-linear-gradient(180deg,#c6c6c6 0 4px,transparent 4px 8px)"></div>
<div style="left:1446px;top:208px;width:1px;height:407px;background:repeating-linear-gradient(180deg,#c6c6c6 0 4px,transparent 4px 8px)"></div>
<div style="left:1446px;top:773px;width:1px;height:227px;background:repeating-linear-gradient(180deg,#c6c6c6 0 4px,transparent 4px 8px)"></div>
<div style="left:1576px;top:208px;width:1px;height:407px;background:repeating-linear-gradient(180deg,#c6c6c6 0 4px,transparent 4px 8px)"></div>
<div style="left:1576px;top:773px;width:1px;height:227px;background:repeating-linear-gradient(180deg,#c6c6c6 0 4px,transparent 4px 8px)"></div>
<div style="left:1706px;top:208px;width:1px;height:407px;background:repeating-linear-gradient(180deg,#c6c6c6 0 4px,transparent 4px 8px)"></div>
<div style="left:1706px;top:773px;width:1px;height:227px;background:repeating-linear-gradient(180deg,#c6c6c6 0 4px,transparent 4px 8px)"></div>
<div style="left:538px;top:343px;width:1300px;height:1px;background:repeating-linear-gradient(90deg,#c6c6c6 0 4px,transparent 4px 8px)"></div>
<div style="left:538px;top:479px;width:1300px;height:1px;background:repeating-linear-gradient(90deg,#c6c6c6 0 4px,transparent 4px 8px)"></div>
<div style="left:538px;top:615px;width:1300px;height:1px;background:repeating-linear-gradient(90deg,#c6c6c6 0 4px,transparent 4px 8px)"></div>
<div style="left:538px;top:772px;width:1300px;height:1px;background:repeating-linear-gradient(90deg,#c6c6c6 0 4px,transparent 4px 8px)"></div>
<div style="left:538px;top:908px;width:1300px;height:1px;background:repeating-linear-gradient(90deg,#c6c6c6 0 4px,transparent 4px 8px)"></div>
<div class="t" style="left:423px;width:77px;text-align:center;top:269.5px;font-size:16.5px;color:#222">00001</div>
<div class="t" style="left:423px;width:77px;text-align:center;top:405.5px;font-size:16.5px;color:#222">00002</div>
<div class="t" style="left:423px;width:77px;text-align:center;top:541.5px;font-size:16.5px;color:#222">00003</div>
<div class="t" style="left:423px;width:77px;text-align:center;top:687.5px;font-size:16.5px;color:#222">00004</div>
<div class="t" style="left:423px;width:77px;text-align:center;top:833.5px;font-size:16.5px;color:#222">00008</div>
<div class="t" style="left:423px;width:77px;text-align:center;top:969.5px;font-size:16.5px;color:#222">00009</div>
<div style="left:421px;top:207px;width:78px;height:137px;border:1px solid #8a8a8a;border-right:none"></div>
<div style="left:498px;top:207px;width:39px;height:137px;border:1px solid #8a8a8a"></div>
<div style="left:536px;top:208px;width:3px;height:792px;background:#000"></div>
<div style="left:1837px;top:208px;width:3px;height:792px;background:#000"></div>
<div style="left:538px;top:208px;width:130px;height:136px;border:3px solid #a9ea8c;border-left-width:2px"></div>
<div class="t s" style="left:575px;top:230.0px;font-size:20px;color:#000"><span style="display:inline-flex;justify-content:center;width:9.33px"><span style="display:inline-block;transform:scaleX(0.657)">C</span></span><span style="display:inline-flex;justify-content:center;width:9.33px"><span style="display:inline-block;transform:scaleX(0.657)">R</span></span><span style="display:inline-flex;justify-content:center;width:9.33px"><span style="display:inline-block;transform:scaleX(0.877)">2</span></span><span style="display:inline-flex;justify-content:center;width:9.33px"><span style="display:inline-block;transform:scaleX(0.877)">0</span></span><span style="display:inline-flex;justify-content:center;width:9.33px"><span style="display:inline-block;transform:scaleX(0.877)">0</span></span><span style="display:inline-flex;justify-content:center;width:9.33px"><span style="display:inline-block;transform:scaleX(0.877)">2</span></span></div>
<div class="t s" style="left:551px;top:301px;font-size:16px;color:#5cb860"><span style="display:inline-block;width:17.00px;text-align:center">常</span><span style="display:inline-block;width:17.00px;text-align:center">时</span><span style="display:inline-flex;justify-content:center;width:8.50px"><span style="display:inline-block;transform:scaleX(0.651)">O</span></span><span style="display:inline-flex;justify-content:center;width:8.50px"><span style="display:inline-block;transform:scaleX(0.651)">N</span></span></div>
<div class="t s" style="left:575px;top:366.0px;font-size:20px;color:#9b30d0"><span style="display:inline-flex;justify-content:center;width:9.33px"><span style="display:inline-block;transform:scaleX(0.657)">R</span></span><span style="display:inline-flex;justify-content:center;width:9.33px"><span style="display:inline-block;transform:scaleX(0.877)">4</span></span><span style="display:inline-flex;justify-content:center;width:9.33px"><span style="display:inline-block;transform:scaleX(0.877)">2</span></span><span style="display:inline-flex;justify-content:center;width:9.33px"><span style="display:inline-block;transform:scaleX(0.877)">0</span></span><span style="display:inline-flex;justify-content:center;width:9.33px"><span style="display:inline-block;transform:scaleX(0.877)">0</span></span><span style="display:inline-flex;justify-content:center;width:9.33px"><span style="display:inline-block;transform:scaleX(0.877)">0</span></span></div>
<div class="t s" style="left:551px;top:437px;font-size:16px;color:#5cb860"><span style="display:inline-block;width:17.00px;text-align:center">轴</span><span style="display:inline-flex;justify-content:center;width:8.50px"><span style="display:inline-block;transform:scaleX(0.940)">1</span></span><span style="display:inline-block;width:8.50px"></span><span style="display:inline-block;width:17.00px;text-align:center">轴</span><span style="display:inline-block;width:17.00px;text-align:center">错</span><span style="display:inline-block;width:17.00px;text-align:center">误</span><span style="display:inline-block;width:17.00px;text-align:center">清</span></div>
<div class="t s" style="left:551px;top:456px;font-size:16px;color:#5cb860"><span style="display:inline-block;width:17.00px;text-align:center">除</span></div>
<div class="t s" style="left:575px;top:502.0px;font-size:20px;color:#9b30d0"><span style="display:inline-flex;justify-content:center;width:9.33px"><span style="display:inline-block;transform:scaleX(0.657)">R</span></span><span style="display:inline-flex;justify-content:center;width:9.33px"><span style="display:inline-block;transform:scaleX(0.877)">4</span></span><span style="display:inline-flex;justify-content:center;width:9.33px"><span style="display:inline-block;transform:scaleX(0.877)">2</span></span><span style="display:inline-flex;justify-content:center;width:9.33px"><span style="display:inline-block;transform:scaleX(0.877)">4</span></span><span style="display:inline-flex;justify-content:center;width:9.33px"><span style="display:inline-block;transform:scaleX(0.877)">0</span></span><span style="display:inline-flex;justify-content:center;width:9.33px"><span style="display:inline-block;transform:scaleX(0.877)">1</span></span></div>
<div class="t s" style="left:551px;top:573px;font-size:16px;color:#5cb860"><span style="display:inline-block;width:17.00px;text-align:center">轴</span><span style="display:inline-flex;justify-content:center;width:8.50px"><span style="display:inline-block;transform:scaleX(0.940)">1</span></span><span style="display:inline-block;width:8.50px"></span><span style="display:inline-block;width:17.00px;text-align:center">轴</span><span style="display:inline-block;width:17.00px;text-align:center">警</span><span style="display:inline-block;width:17.00px;text-align:center">报</span></div>
<div class="t s" style="left:575px;top:638.0px;font-size:20px;color:#000"><span style="display:inline-flex;justify-content:center;width:9.33px"><span style="display:inline-block;transform:scaleX(0.657)">C</span></span><span style="display:inline-flex;justify-content:center;width:9.33px"><span style="display:inline-block;transform:scaleX(0.657)">R</span></span><span style="display:inline-flex;justify-content:center;width:9.33px"><span style="display:inline-block;transform:scaleX(0.877)">2</span></span><span style="display:inline-flex;justify-content:center;width:9.33px"><span style="display:inline-block;transform:scaleX(0.877)">0</span></span><span style="display:inline-flex;justify-content:center;width:9.33px"><span style="display:inline-block;transform:scaleX(0.877)">0</span></span><span style="display:inline-flex;justify-content:center;width:9.33px"><span style="display:inline-block;transform:scaleX(0.877)">2</span></span></div>
<div class="t s" style="left:551px;top:710px;font-size:16px;color:#5cb860"><span style="display:inline-block;width:17.00px;text-align:center">常</span><span style="display:inline-block;width:17.00px;text-align:center">时</span><span style="display:inline-flex;justify-content:center;width:8.50px"><span style="display:inline-block;transform:scaleX(0.651)">O</span></span><span style="display:inline-flex;justify-content:center;width:8.50px"><span style="display:inline-block;transform:scaleX(0.651)">N</span></span></div>
<div class="t s" style="left:575px;top:795.0px;font-size:20px;color:#000"><span style="display:inline-flex;justify-content:center;width:9.33px"><span style="display:inline-block;transform:scaleX(0.657)">C</span></span><span style="display:inline-flex;justify-content:center;width:9.33px"><span style="display:inline-block;transform:scaleX(0.657)">R</span></span><span style="display:inline-flex;justify-content:center;width:9.33px"><span style="display:inline-block;transform:scaleX(0.877)">2</span></span><span style="display:inline-flex;justify-content:center;width:9.33px"><span style="display:inline-block;transform:scaleX(0.877)">0</span></span><span style="display:inline-flex;justify-content:center;width:9.33px"><span style="display:inline-block;transform:scaleX(0.877)">0</span></span><span style="display:inline-flex;justify-content:center;width:9.33px"><span style="display:inline-block;transform:scaleX(0.877)">2</span></span></div>
<div class="t s" style="left:551px;top:866px;font-size:16px;color:#5cb860"><span style="display:inline-block;width:17.00px;text-align:center">常</span><span style="display:inline-block;width:17.00px;text-align:center">时</span><span style="display:inline-flex;justify-content:center;width:8.50px"><span style="display:inline-block;transform:scaleX(0.651)">O</span></span><span style="display:inline-flex;justify-content:center;width:8.50px"><span style="display:inline-block;transform:scaleX(0.651)">N</span></span></div>
<div style="left:504px;top:681px;width:25px;height:24px;background:#fff;border:1px solid #888"></div>
<svg style="left:508px;top:685px;" width="17" height="17" viewBox="0 0 17 17" preserveAspectRatio="none"><path d="M8.500 0v17M0 8.500h17" stroke="#222" stroke-width="2.600"/></svg>
<svg style="left:1758px;top:251px;" width="28" height="28" viewBox="0 0 28 28" preserveAspectRatio="none"><circle cx="14" cy="14" r="13.300" fill="#fff" stroke="#2e7d32" stroke-width="1.300"/></svg>
<div class="t s" style="left:1622px;width:300px;text-align:center;top:230.0px;font-size:20px;color:#9b30d0"><span style="display:inline-flex;justify-content:center;width:9.33px"><span style="display:inline-block;transform:scaleX(0.657)">R</span></span><span style="display:inline-flex;justify-content:center;width:9.33px"><span style="display:inline-block;transform:scaleX(0.877)">3</span></span><span style="display:inline-flex;justify-content:center;width:9.33px"><span style="display:inline-block;transform:scaleX(0.877)">9</span></span><span style="display:inline-flex;justify-content:center;width:9.33px"><span style="display:inline-block;transform:scaleX(0.877)">6</span></span><span style="display:inline-flex;justify-content:center;width:9.33px"><span style="display:inline-block;transform:scaleX(0.877)">0</span></span><span style="display:inline-flex;justify-content:center;width:9.33px"><span style="display:inline-block;transform:scaleX(0.877)">0</span></span></div>
<svg style="left:1758px;top:387px;" width="28" height="28" viewBox="0 0 28 28" preserveAspectRatio="none"><circle cx="14" cy="14" r="13.300" fill="#fff" stroke="#2e7d32" stroke-width="1.300"/></svg>
<div class="t s" style="left:1622px;width:300px;text-align:center;top:366.0px;font-size:20px;color:#9b30d0"><span style="display:inline-flex;justify-content:center;width:9.33px"><span style="display:inline-block;transform:scaleX(0.657)">R</span></span><span style="display:inline-flex;justify-content:center;width:9.33px"><span style="display:inline-block;transform:scaleX(0.877)">4</span></span><span style="display:inline-flex;justify-content:center;width:9.33px"><span style="display:inline-block;transform:scaleX(0.877)">2</span></span><span style="display:inline-flex;justify-content:center;width:9.33px"><span style="display:inline-block;transform:scaleX(0.877)">0</span></span><span style="display:inline-flex;justify-content:center;width:9.33px"><span style="display:inline-block;transform:scaleX(0.877)">0</span></span><span style="display:inline-flex;justify-content:center;width:9.33px"><span style="display:inline-block;transform:scaleX(0.877)">0</span></span></div>
<div class="t s" style="left:1721px;top:301px;font-size:16px;color:#5cb860"><span style="display:inline-block;width:17.00px;text-align:center">动</span><span style="display:inline-block;width:17.00px;text-align:center">作</span><span style="display:inline-block;width:17.00px;text-align:center">使</span><span style="display:inline-block;width:17.00px;text-align:center">能</span></div>
<div class="t s" style="left:1721px;top:437px;font-size:16px;color:#5cb860"><span style="display:inline-block;width:17.00px;text-align:center">轴</span><span style="display:inline-flex;justify-content:center;width:8.50px"><span style="display:inline-block;transform:scaleX(0.940)">1</span></span><span style="display:inline-block;width:8.50px"></span><span style="display:inline-block;width:17.00px;text-align:center">轴</span><span style="display:inline-block;width:17.00px;text-align:center">错</span><span style="display:inline-block;width:17.00px;text-align:center">误</span><span style="display:inline-block;width:17.00px;text-align:center">清</span></div>
<div class="t s" style="left:1721px;top:456px;font-size:16px;color:#5cb860"><span style="display:inline-block;width:17.00px;text-align:center">除</span></div>
<div style="left:1100px;top:642px;width:728px;height:106px;background:#f9f4ff"></div>
<div style="left:1187px;top:797px;width:641px;height:62px;background:#fff"></div>
<div class="t s" style="left:1362px;width:300px;text-align:center;top:820.0px;font-size:20px;color:#000"><span style="display:inline-flex;justify-content:center;width:9.33px"><span style="display:inline-block;transform:scaleX(0.877)">#</span></span><span style="display:inline-flex;justify-content:center;width:9.33px"><span style="display:inline-block;transform:scaleX(0.877)">2</span></span><span style="display:inline-flex;justify-content:center;width:9.33px"><span style="display:inline-block;transform:scaleX(0.877)">2</span></span><span style="display:inline-flex;justify-content:center;width:9.33px"><span style="display:inline-block;transform:scaleX(0.877)">6</span></span><span style="display:inline-flex;justify-content:center;width:9.33px"><span style="display:inline-block;transform:scaleX(0.877)">2</span></span></div>
<div class="t s" style="left:1492px;width:300px;text-align:center;top:820.0px;font-size:20px;color:#000"><span style="display:inline-flex;justify-content:center;width:9.33px"><span style="display:inline-block;transform:scaleX(0.607)">D</span></span><span style="display:inline-flex;justify-content:center;width:9.33px"><span style="display:inline-block;transform:scaleX(0.493)">M</span></span><span style="display:inline-flex;justify-content:center;width:9.33px"><span style="display:inline-block;transform:scaleX(0.877)">5</span></span></div>
<div class="t s" style="left:1622px;width:300px;text-align:center;top:820.0px;font-size:20px;color:#000"><span style="display:inline-flex;justify-content:center;width:9.33px"><span style="display:inline-block;transform:scaleX(0.877)">#</span></span><span style="display:inline-flex;justify-content:center;width:9.33px"><span style="display:inline-block;transform:scaleX(0.877)">1</span></span></div>
<div class="t s" style="left:1461px;top:866px;font-size:16px;color:#74b4b4"><span style="display:inline-block;width:17.00px;text-align:center">轴</span><span style="display:inline-flex;justify-content:center;width:8.50px"><span style="display:inline-block;transform:scaleX(0.940)">1</span></span><span style="display:inline-block;width:8.50px"></span><span style="display:inline-block;width:17.00px;text-align:center">定</span><span style="display:inline-block;width:17.00px;text-align:center">位</span><span style="display:inline-block;width:17.00px;text-align:center">速</span><span style="display:inline-block;width:17.00px;text-align:center">度</span></div>
<div class="t s" style="left:1461px;top:885px;font-size:16px;color:#74b4b4"><span style="display:inline-block;width:17.00px;text-align:center">倍</span><span style="display:inline-block;width:17.00px;text-align:center">率</span></div>
<div class="t s" style="left:1347px;top:922.5px;font-size:20px;color:#2e7d32"><span style="display:inline-flex;justify-content:center;width:9.33px"><span style="display:inline-block;transform:scaleX(0.607)">U</span></span><span style="display:inline-flex;justify-content:center;width:9.33px"><span style="display:inline-block;transform:scaleX(0.465)">W</span></span><span style="display:inline-flex;justify-content:center;width:9.33px"><span style="display:inline-block;transform:scaleX(0.657)">R</span></span><span style="display:inline-flex;justify-content:center;width:9.33px">I</span><span style="display:inline-flex;justify-content:center;width:9.33px"><span style="display:inline-block;transform:scaleX(0.718)">T</span></span></div>
<div class="t s" style="left:1232px;width:300px;text-align:center;top:956.5px;font-size:20px;color:#000"><span style="display:inline-flex;justify-content:center;width:9.33px"><span style="display:inline-block;transform:scaleX(0.877)">#</span></span><span style="display:inline-flex;justify-content:center;width:9.33px"><span style="display:inline-block;transform:scaleX(0.877)">2</span></span></div>
<div class="t s" style="left:1362px;width:300px;text-align:center;top:956.5px;font-size:20px;color:#000"><span style="display:inline-flex;justify-content:center;width:9.33px"><span style="display:inline-block;transform:scaleX(0.877)">#</span></span><span style="display:inline-flex;justify-content:center;width:9.33px"><span style="display:inline-block;transform:scaleX(0.877)">2</span></span><span style="display:inline-flex;justify-content:center;width:9.33px"><span style="display:inline-block;transform:scaleX(0.877)">2</span></span><span style="display:inline-flex;justify-content:center;width:9.33px"><span style="display:inline-block;transform:scaleX(0.877)">6</span></span><span style="display:inline-flex;justify-content:center;width:9.33px"><span style="display:inline-block;transform:scaleX(0.877)">2</span></span></div>
<div class="t s" style="left:1492px;width:300px;text-align:center;top:956.5px;font-size:20px;color:#000"><span style="display:inline-flex;justify-content:center;width:9.33px"><span style="display:inline-block;transform:scaleX(0.607)">D</span></span><span style="display:inline-flex;justify-content:center;width:9.33px"><span style="display:inline-block;transform:scaleX(0.493)">M</span></span><span style="display:inline-flex;justify-content:center;width:9.33px"><span style="display:inline-block;transform:scaleX(0.877)">6</span></span></div>
<div class="t s" style="left:1622px;width:300px;text-align:center;top:956.5px;font-size:20px;color:#000"><span style="display:inline-flex;justify-content:center;width:9.33px"><span style="display:inline-block;transform:scaleX(0.877)">#</span></span><span style="display:inline-flex;justify-content:center;width:9.33px"><span style="display:inline-block;transform:scaleX(0.877)">1</span></span></div>
<svg style="left:0px;top:0px;pointer-events:none" width="1920" height="1040" viewBox="0 0 1920 1040" preserveAspectRatio="none"><path d="M538 266L589 266" stroke="#2e7d32" stroke-width="1.500" fill="none"/><path d="M589 252.5L589 279.5" stroke="#2e7d32" stroke-width="1.500" fill="none"/><path d="M615 252.5L615 279.5" stroke="#2e7d32" stroke-width="1.500" fill="none"/><path d="M615 266L667 266" stroke="#2e7d32" stroke-width="1.500" fill="none"/><path d="M538 402L589 402" stroke="#2e7d32" stroke-width="1.500" fill="none"/><path d="M589 388.5L589 415.5" stroke="#2e7d32" stroke-width="1.500" fill="none"/><path d="M615 388.5L615 415.5" stroke="#2e7d32" stroke-width="1.500" fill="none"/><path d="M615 402L667 402" stroke="#2e7d32" stroke-width="1.500" fill="none"/><path d="M538 538L589 538" stroke="#2e7d32" stroke-width="1.500" fill="none"/><path d="M589 524.5L589 551.5" stroke="#2e7d32" stroke-width="1.500" fill="none"/><path d="M615 524.5L615 551.5" stroke="#2e7d32" stroke-width="1.500" fill="none"/><path d="M615 538L667 538" stroke="#2e7d32" stroke-width="1.500" fill="none"/><path d="M538 674L589 674" stroke="#2e7d32" stroke-width="1.500" fill="none"/><path d="M589 660.5L589 687.5" stroke="#2e7d32" stroke-width="1.500" fill="none"/><path d="M615 660.5L615 687.5" stroke="#2e7d32" stroke-width="1.500" fill="none"/><path d="M615 674L667 674" stroke="#2e7d32" stroke-width="1.500" fill="none"/><path d="M538 831L589 831" stroke="#2e7d32" stroke-width="1.500" fill="none"/><path d="M589 817.5L589 844.5" stroke="#2e7d32" stroke-width="1.500" fill="none"/><path d="M615 817.5L615 844.5" stroke="#2e7d32" stroke-width="1.500" fill="none"/><path d="M615 831L667 831" stroke="#2e7d32" stroke-width="1.500" fill="none"/><path d="M667 266L1707 266" stroke="#333" stroke-width="1.500" fill="none"/><path d="M1707 266L1759 266" stroke="#2e7d32" stroke-width="1.500" fill="none"/><path d="M1785 266L1838 266" stroke="#2e7d32" stroke-width="1.500" fill="none"/><path d="M667 402L1707 402" stroke="#333" stroke-width="1.500" fill="none"/><path d="M1707 402L1759 402" stroke="#2e7d32" stroke-width="1.500" fill="none"/><path d="M1785 402L1838 402" stroke="#2e7d32" stroke-width="1.500" fill="none"/><path d="M667 674L1100 674" stroke="#333" stroke-width="1.500" fill="none"/><path d="M1100 641.7H1828.3V748H1100Z" stroke="#2e7d32" stroke-width="1.500" fill="none"/><path d="M1828 674L1838 674" stroke="#2e7d32" stroke-width="1.500" fill="none"/><path d="M1187 796.8H1828.3V859H1187Z" stroke="#2e7d32" stroke-width="1.500" fill="none"/><path d="M1446.7 796.8L1446.7 859" stroke="#2e7d32" stroke-width="1.500" fill="none"/><path d="M1576.7 796.8L1576.7 859" stroke="#2e7d32" stroke-width="1.500" fill="none"/><path d="M1706.7 796.8L1706.7 859" stroke="#2e7d32" stroke-width="1.500" fill="none"/><path d="M1828 831L1838 831" stroke="#2e7d32" stroke-width="1.500" fill="none"/><path d="M667 831L667 967" stroke="#333" stroke-width="1.500" fill="none"/><path d="M667 967L1317 967" stroke="#333" stroke-width="1.500" fill="none"/><path d="M1317 967L1328 967" stroke="#2e7d32" stroke-width="1.500" fill="none"/><path d="M1339 933H1328V995.5H1828.3V933H1408" stroke="#2e7d32" stroke-width="1.500" fill="none"/><path d="M1446.7 933L1446.7 995.5" stroke="#2e7d32" stroke-width="1.500" fill="none"/><path d="M1576.7 933L1576.7 995.5" stroke="#2e7d32" stroke-width="1.500" fill="none"/><path d="M1706.7 933L1706.7 995.5" stroke="#2e7d32" stroke-width="1.500" fill="none"/><path d="M1828 967L1838 967" stroke="#2e7d32" stroke-width="1.500" fill="none"/></svg>
<div style="left:536px;top:208px;width:3px;height:792px;background:#000"></div>
<div style="left:1837px;top:208px;width:3px;height:792px;background:#000"></div>
<div style="left:1900px;top:156px;width:20px;height:19px;background:#9a9a9a"></div>
<svg style="left:1904px;top:159px;" width="13" height="13" viewBox="0 0 13 13" preserveAspectRatio="none"><path d="M6.500 0v13M0 6.500h13" stroke="#fff" stroke-width="2.400"/></svg>
<svg style="left:1899px;top:186px;" width="20" height="20" viewBox="0 0 20 20" preserveAspectRatio="none"><path d="M0 8.500h19M0 11h19" stroke="#444" stroke-width="1"/><path d="M9.500 0.500v8M9.500 11v8M6.500 3.500l3-3 3 3M6.500 16l3 3 3-3" stroke="#444" stroke-width="1.200" fill="none"/></svg>
<svg style="left:1904px;top:213px;" width="12" height="8" viewBox="0 0 12 8" preserveAspectRatio="none"><path d="M1 7l5-5 5 5" stroke="#444" stroke-width="2" fill="none"/></svg>
<svg style="left:1904px;top:988px;" width="12" height="8" viewBox="0 0 12 8" preserveAspectRatio="none"><path d="M1 1l5 5 5-5" stroke="#444" stroke-width="2" fill="none"/></svg>
<div style="left:1900px;top:227px;width:18px;height:31px;background:#cdcdcd"></div>
<!-- g_tool -->
<svg style="left:8px;top:66px;" width="3" height="20" viewBox="0 0 3 20" preserveAspectRatio="none"><g fill="#b4b4b4"><rect x="0" y="1" width="2.500" height="2.500"/><rect x="0" y="6" width="2.500" height="2.500"/><rect x="0" y="11" width="2.500" height="2.500"/><rect x="0" y="16" width="2.500" height="2.500"/></g></svg>
<svg style="left:18px;top:65px;" width="22" height="22" viewBox="0 0 22 22" preserveAspectRatio="none"><path d="M3.500 1.500h10l4.500 4.500v14.500h-14.500z" fill="#fff" stroke="#8a8a8a"/><path d="M13.500 1.500v4.500h4.500" fill="#f0f0f0" stroke="#8a8a8a"/></svg>
<svg style="left:46px;top:66px;" width="22" height="22" viewBox="0 0 22 22" preserveAspectRatio="none"><path d="M1 6q0-1.500 1.500-1.500h5l1.500 2h8v4h-16z" fill="#f3b536"/><path d="M1 20l2.500-10h17l-2.500 10z" fill="#ffd676"/><path d="M1 8v12" stroke="#f3b536" stroke-width="1.200"/><path d="M12 3a5.500 5.500 0 0 1 6.500 7" stroke="#2f7fd6" stroke-width="2.600" fill="none"/><path d="M14.500 9h8l-4 5z" fill="#2f7fd6"/></svg>
<svg style="left:75px;top:65px;" width="22" height="22" viewBox="0 0 22 22" preserveAspectRatio="none"><path d="M2 2h16l2 2v16h-18z" fill="#8b2fb5"/><rect x="5" y="2" width="11" height="7" fill="#fff"/><path d="M7 4.500h7M7 6.500h7" stroke="#aaa" stroke-width="1"/><rect x="5" y="13" width="12" height="7" fill="#fff"/><rect x="9" y="15" width="4" height="5" fill="#8b2fb5"/></svg>
<svg style="left:104px;top:65px;" width="22" height="22" viewBox="0 0 22 22" preserveAspectRatio="none"><path d="M3.500 1.500h10l4 4v15h-14z" fill="#fff" stroke="#9a9a9a"/><path d="M13.500 1.500v4h4" fill="#eee" stroke="#9a9a9a"/><path d="M5 10h2.500M9.5 10h1.500M14 10h2M7.5 8.5v3M9.5 8.5v3" stroke="#555" stroke-width="0.900" fill="none"/><circle cx="12.5" cy="10" r="1.300" fill="none" stroke="#555" stroke-width="0.800"/><path d="M5 15h2.500M9.5 15h1.500M14 15h2M7.5 13.5v3M9.5 13.5v3" stroke="#555" stroke-width="0.900" fill="none"/><circle cx="12.5" cy="15" r="1.300" fill="none" stroke="#555" stroke-width="0.800"/></svg>
<svg style="left:132px;top:66px;" width="22" height="22" viewBox="0 0 22 22" preserveAspectRatio="none"><path d="M1 6q0-1.500 1.500-1.500h5l1.500 2h8v4h-16z" fill="#f3b536"/><rect x="3" y="7" width="13" height="6" fill="#fff" stroke="#999" stroke-width="0.600"/><path d="M4 10h2.500M8.5 10h1.500M13 10h2M6.5 8.5v3M8.5 8.5v3" stroke="#555" stroke-width="0.900" fill="none"/><circle cx="11.5" cy="10" r="1.300" fill="none" stroke="#555" stroke-width="0.800"/><path d="M1 20l2.500-7h17l-2.500 7z" fill="#ffd676"/><path d="M1 8v12" stroke="#f3b536" stroke-width="1.200"/><path d="M12 1.500a5.500 5.500 0 0 1 6.500 6" stroke="#2f7fd6" stroke-width="2.600" fill="none"/><path d="M14.500 7h8l-4 5z" fill="#2f7fd6"/></svg>
<svg style="left:161px;top:66px;" width="22" height="22" viewBox="0 0 22 22" preserveAspectRatio="none"><path d="M1 5q0-1.500 1.500-1.500h5l1.500 2h6v12h-14z" fill="#f5be4a"/><path d="M9 6v-2.500a3.500 3.500 0 0 1 7 0v5" stroke="#2f7fd6" stroke-width="2.200" fill="none"/><path d="M6 6l3-4 3 4z" fill="#2f7fd6"/><rect x="8.500" y="11.500" width="13" height="8" fill="#fff" stroke="#555" stroke-width="1.200"/><path d="M10 15.5h2.500M14.5 15.5h1.500M19 15.5h2M12.5 14.0v3M14.5 14.0v3" stroke="#555" stroke-width="0.900" fill="none"/><circle cx="17.5" cy="15.5" r="1.300" fill="none" stroke="#555" stroke-width="0.800"/></svg>
<svg style="left:190px;top:65px;" width="22" height="22" viewBox="0 0 22 22" preserveAspectRatio="none"><path d="M2.500 1.500h10l4 4v14h-14z" fill="#fff" stroke="#9a9a9a"/><path d="M12.500 1.500v4h4" fill="#eee" stroke="#9a9a9a"/><path d="M4 9h2.500M8.5 9h1.500M13 9h2M6.5 7.5v3M8.5 7.5v3" stroke="#555" stroke-width="0.900" fill="none"/><circle cx="11.5" cy="9" r="1.300" fill="none" stroke="#555" stroke-width="0.800"/><path d="M4 14h2.500M8.5 14h1.500M13 14h2M6.5 12.5v3M8.5 12.5v3" stroke="#555" stroke-width="0.900" fill="none"/><circle cx="11.5" cy="14" r="1.300" fill="none" stroke="#555" stroke-width="0.800"/><path d="M10 9l11 11M21 9l-11 11" stroke="#e23a3a" stroke-width="1.800"/></svg>
<svg style="left:219px;top:65px;" width="22" height="22" viewBox="0 0 22 22" preserveAspectRatio="none"><rect x="5" y="1.500" width="12" height="7" fill="#fff" stroke="#888"/><rect x="1" y="7" width="20" height="10" rx="1.500" fill="#4a4a4a"/><rect x="5" y="13" width="12" height="8" fill="#fff" stroke="#666"/><rect x="7" y="15" width="8" height="1.800" fill="#3b84e8"/><rect x="7" y="17.800" width="8" height="1.800" fill="#3b84e8"/></svg>
<svg style="left:247px;top:65px;" width="22" height="22" viewBox="0 0 22 22" preserveAspectRatio="none"><path d="M2.500 1.500h8l3.500 3.500v12h-11.500z" fill="#fff" stroke="#9a9a9a"/><path d="M10.500 1.500v3.500h3.500" fill="#eee" stroke="#9a9a9a"/><circle cx="13.500" cy="13" r="4.500" fill="#d6ecf8" stroke="#444" stroke-width="1.600"/><path d="M16.800 16.300l4.200 4.200" stroke="#333" stroke-width="2.200"/></svg>
<svg style="left:276px;top:65px;" width="22" height="22" viewBox="0 0 22 22" preserveAspectRatio="none"><circle cx="11" cy="11" r="10.500" fill="#2f7fd0"/><path d="M7.500 8.500a3.600 3.600 0 1 1 5.500 3q-2 1.200-2 3.300" stroke="#fff" stroke-width="2.300" fill="none"/><circle cx="11" cy="18" r="1.500" fill="#fff"/></svg>
<div style="left:305px;top:64px;width:1px;height:27px;background:#c8c8c8"></div>
<svg style="left:311px;top:66px;" width="3" height="20" viewBox="0 0 3 20" preserveAspectRatio="none"><g fill="#b4b4b4"><rect x="0" y="1" width="2.500" height="2.500"/><rect x="0" y="6" width="2.500" height="2.500"/><rect x="0" y="11" width="2.500" height="2.500"/><rect x="0" y="16" width="2.500" height="2.500"/></g></svg>
<svg style="left:320px;top:66px;" width="22" height="22" viewBox="0 0 22 22" preserveAspectRatio="none"><rect x="1" y="2" width="11" height="18" fill="#3a3a3a"/><rect x="2.500" y="4" width="7" height="3.500" fill="#888"/><rect x="2" y="3" width="2" height="1.500" fill="#d33"/><path d="M2 10h8M2 13h8M2 16h8" stroke="#666" stroke-width="1"/><rect x="8" y="15" width="2" height="2" fill="#3c3"/><path d="M14 2.500a4 4 0 0 0 2.500 7v8h3v-8a4 4 0 0 0 .500-7v4h-3v-4z" fill="#777"/><path d="M11 19h10" stroke="#2f7fd6" stroke-width="2"/></svg>
<div style="left:347px;top:62px;width:186px;height:29px;background:#fff"></div>
<div class="t" style="left:352px;top:69px;font-size:16.500px;color:#111">USB</div>
<svg style="left:522px;top:75px;" width="9" height="5" viewBox="0 0 9 5" preserveAspectRatio="none"><path d="M0 0h9l-4.500 5z" fill="#000"/></svg>
<div style="left:536px;top:64px;width:1px;height:27px;background:#c8c8c8"></div>
<svg style="left:543px;top:66px;" width="3" height="20" viewBox="0 0 3 20" preserveAspectRatio="none"><g fill="#b4b4b4"><rect x="0" y="1" width="2.500" height="2.500"/><rect x="0" y="6" width="2.500" height="2.500"/><rect x="0" y="11" width="2.500" height="2.500"/><rect x="0" y="16" width="2.500" height="2.500"/></g></svg>
<svg style="left:554px;top:65px;" width="22" height="22" viewBox="0 0 22 22" preserveAspectRatio="none"><rect x="2.500" y="3.500" width="14" height="11" fill="#fff" stroke="#333" stroke-width="1.400"/><path d="M0 17h19v1.500h-19z" fill="#333"/><path d="M5 6v6M8 6v6M5 9h-1.500M8 9h2" stroke="#555" stroke-width="1"/><path d="M9 9h6v-3.500l6 5-6 5v-3.500h-6z" fill="#2f7fd6"/></svg>
<svg style="left:582px;top:65px;" width="22" height="22" viewBox="0 0 22 22" preserveAspectRatio="none"><rect x="1" y="5" width="12" height="16" fill="#444"/><rect x="2.5" y="7" width="7" height="4" fill="#57d36b"/><rect x="2.5" y="14" width="2" height="2" fill="#e0a030"/><rect x="6" y="14" width="2" height="2" fill="#d9534f"/><rect x="11" y="5" width="2" height="16" fill="#666"/><rect x="10.500" y="1.500" width="10" height="7" rx="1.500" fill="#fff" stroke="#aaa"/><path d="M12.500 8.500l-1 3 4-3z" fill="#fff" stroke="#aaa" stroke-width="0.800"/><path d="M12.500 4h6M12.500 6h6" stroke="#aaa" stroke-width="1"/></svg>
<svg style="left:612px;top:65px;" width="22" height="22" viewBox="0 0 22 22" preserveAspectRatio="none"><rect x="9" y="3" width="12" height="16" fill="#444"/><rect x="10.5" y="5" width="7" height="4" fill="#57d36b"/><rect x="10.5" y="12" width="2" height="2" fill="#e0a030"/><rect x="14" y="12" width="2" height="2" fill="#d9534f"/><rect x="19" y="3" width="2" height="16" fill="#666"/><path d="M0 9.5h6v-3.500l6 5-6 5v-3.500h-6z" fill="#2f7fd6"/></svg>
<svg style="left:640px;top:65px;" width="22" height="22" viewBox="0 0 22 22" preserveAspectRatio="none"><rect x="1" y="3" width="12" height="16" fill="#444"/><rect x="2.5" y="5" width="7" height="4" fill="#57d36b"/><rect x="2.5" y="12" width="2" height="2" fill="#e0a030"/><rect x="6" y="12" width="2" height="2" fill="#d9534f"/><rect x="11" y="3" width="2" height="16" fill="#666"/><path d="M9 9.5h6v-3.500l6 5-6 5v-3.500h-6z" fill="#2f7fd6"/></svg>
<svg style="left:669px;top:65px;" width="22" height="22" viewBox="0 0 22 22" preserveAspectRatio="none"><path d="M11.500 1.500h6l3 3v9h-9z" fill="#fff" stroke="#aaa"/><rect x="1.500" y="9.500" width="9" height="11" fill="#fff" stroke="#aaa"/><circle cx="11.500" cy="12" r="5" fill="#d6ecf8" stroke="#444" stroke-width="1.700"/><path d="M15 16l5 5" stroke="#333" stroke-width="2.300"/></svg>
<svg style="left:698px;top:65px;" width="22" height="22" viewBox="0 0 22 22" preserveAspectRatio="none"><rect x="3.500" y="6.500" width="15" height="10" fill="#fff" stroke="#333" stroke-width="1.400"/><path d="M1 19h20v1.500h-20z" fill="#333"/><path d="M6 9v5M8.500 9v5M6 11.500h-1.500" stroke="#3b6fd0" stroke-width="1"/><path d="M19 1l3 3-9 9-4 1.500 1.500-4.500z" fill="#2fa84f"/><path d="M9 14.500l1.200-3.500 2.300 2.300z" fill="#e8c89a"/><path d="M9 14.500l.600-1.500 1 1z" fill="#333"/></svg>
<svg style="left:727px;top:65px;" width="22" height="22" viewBox="0 0 22 22" preserveAspectRatio="none"><rect x="2.500" y="5.500" width="12" height="9" fill="#f0f0f0" stroke="#b0b0b0" stroke-width="1.200"/><path d="M5 7v5M8 7v5" stroke="#bbb" stroke-width="1"/><path d="M17 1l3 3-8 8-3.500 1 1-3.500z" fill="#b0b0b0"/><rect x="11" y="12" width="10" height="9" fill="#a8a8a8"/><rect x="13" y="12" width="6" height="3" fill="#d8d8d8"/><path d="M3 17h6M7 15l2.500 2-2.500 2" stroke="#bbb" stroke-width="1.200" fill="none"/></svg>
<svg style="left:755px;top:65px;" width="22" height="22" viewBox="0 0 22 22" preserveAspectRatio="none"><rect x="3.500" y="3.500" width="15" height="12" fill="#fff" stroke="#333" stroke-width="1.400"/><path d="M1 18h20v1.500h-20z" fill="#333"/><path d="M5 7h12M5 12h12" stroke="#555" stroke-width="1"/><g fill="#2fa84f"><rect x="6" y="5.500" width="3" height="3"/><rect x="11" y="5.500" width="3" height="3"/><rect x="6" y="10.500" width="3" height="3"/><rect x="11" y="10.500" width="3" height="3"/></g></svg>
<svg style="left:784px;top:65px;" width="22" height="22" viewBox="0 0 22 22" preserveAspectRatio="none"><rect x="2.500" y="7.500" width="13" height="8" fill="#fff" stroke="#888"/><path d="M3.5 11.5h2.500M8.0 11.5h1.500M12.5 11.5h2M6.0 10.0v3M8.0 10.0v3" stroke="#555" stroke-width="0.900" fill="none"/><circle cx="11.0" cy="11.5" r="1.300" fill="none" stroke="#555" stroke-width="0.800"/><path d="M6 6a7 7 0 0 1 12-1.500" stroke="#f0881e" stroke-width="2.300" fill="none"/><path d="M3 3l5 .500-2.500 4.500z" fill="#f0881e"/><path d="M17 15a7 7 0 0 1-11 3" stroke="#2f7fd6" stroke-width="2.300" fill="none"/><path d="M20.500 13.500l-1 5.500-4.500-3z" fill="#2f7fd6"/></svg>
<svg style="left:813px;top:65px;" width="22" height="22" viewBox="0 0 22 22" preserveAspectRatio="none"><rect x="4.500" y="5.500" width="16" height="14" fill="#eee" stroke="#888"/><rect x="1.500" y="1.500" width="17" height="15" fill="#fff" stroke="#666" stroke-width="1.200"/><text x="3.5" y="11.5" font-family="Liberation Sans" font-size="7.500" font-weight="bold" fill="#444" textLength="13" lengthAdjust="spacingAndGlyphs">DEV</text></svg>
<svg style="left:841px;top:65px;" width="22" height="22" viewBox="0 0 22 22" preserveAspectRatio="none"><rect x="1.500" y="1.500" width="18" height="17" fill="#fff" stroke="#666" stroke-width="1.200"/><text x="4" y="10" font-family="Liberation Sans" font-size="7.500" font-weight="bold" fill="#444" textLength="13" lengthAdjust="spacingAndGlyphs">DEV</text><rect x="2" y="13" width="17" height="5" fill="#f5c518"/><path d="M7 15.500h5v2.500h7v-2.500" fill="#2f7fd6"/><rect x="7" y="14.500" width="6" height="2" fill="#2f7fd6"/><rect x="12" y="16" width="7" height="2" fill="#2f7fd6"/></svg>
<div style="left:872px;top:64px;width:1px;height:27px;background:#c8c8c8"></div>
<svg style="left:880px;top:66px;" width="3" height="20" viewBox="0 0 3 20" preserveAspectRatio="none"><g fill="#b4b4b4"><rect x="0" y="1" width="2.500" height="2.500"/><rect x="0" y="6" width="2.500" height="2.500"/><rect x="0" y="11" width="2.500" height="2.500"/><rect x="0" y="16" width="2.500" height="2.500"/></g></svg>
<svg style="left:887px;top:64px;" width="22" height="24" viewBox="0 0 22 24" preserveAspectRatio="none"><text x="11" y="10" text-anchor="middle" font-family="Liberation Sans" font-size="11.500" fill="#333" textLength="11" lengthAdjust="spacingAndGlyphs">F5</text><path d="M1 16.500h7.500M13.500 16.500h7.500M8.500 12.500v8M13.500 12.500v8" stroke="#444" stroke-width="1.100" fill="none"/></svg>
<svg style="left:916px;top:64px;" width="22" height="24" viewBox="0 0 22 24" preserveAspectRatio="none"><text x="11" y="10" text-anchor="middle" font-family="Liberation Sans" font-size="11.500" fill="#333" textLength="14.5" lengthAdjust="spacingAndGlyphs">SF5</text><path d="M1 16.500h7.500M13.500 16.500h7.500M8.500 12.500v8M13.500 12.500v8M7 20.500l8-8" stroke="#444" stroke-width="1.100" fill="none"/></svg>
<svg style="left:945px;top:64px;" width="22" height="24" viewBox="0 0 22 24" preserveAspectRatio="none"><text x="11" y="10" text-anchor="middle" font-family="Liberation Sans" font-size="11.500" fill="#333" textLength="11" lengthAdjust="spacingAndGlyphs">F4</text><path d="M2 13v3.500h5.500M14.500 16.500h5.500v-3.500M7.500 12.500v8M14.500 12.500v8" stroke="#444" stroke-width="1.100" fill="none"/></svg>
<svg style="left:974px;top:64px;" width="22" height="24" viewBox="0 0 22 24" preserveAspectRatio="none"><text x="11" y="10" text-anchor="middle" font-family="Liberation Sans" font-size="11.500" fill="#333" textLength="14.5" lengthAdjust="spacingAndGlyphs">SF4</text><path d="M2 13v3.500h5.500M14.500 16.500h5.500v-3.500M7.500 12.500v8M14.500 12.500v8M6 20.500l10-8" stroke="#444" stroke-width="1.100" fill="none"/></svg>
<svg style="left:1002px;top:64px;" width="22" height="24" viewBox="0 0 22 24" preserveAspectRatio="none"><text x="11" y="10" text-anchor="middle" font-family="Liberation Sans" font-size="11.500" fill="#333" textLength="11" lengthAdjust="spacingAndGlyphs">F7</text><path d="M1 16.500h6M15 16.500h6" stroke="#444" stroke-width="1.100" fill="none"/><circle cx="11" cy="16.500" r="4" stroke="#444" stroke-width="1.100" fill="none"/></svg>
<svg style="left:1031px;top:64px;" width="22" height="24" viewBox="0 0 22 24" preserveAspectRatio="none"><text x="11" y="10" text-anchor="middle" font-family="Liberation Sans" font-size="11.500" fill="#333" textLength="14.5" lengthAdjust="spacingAndGlyphs">SF7</text><path d="M1 16.500h6M15 16.500h6M7.500 20.500l7-8" stroke="#444" stroke-width="1.100" fill="none"/><circle cx="11" cy="16.500" r="4" stroke="#444" stroke-width="1.100" fill="none"/></svg>
<svg style="left:1060px;top:64px;" width="22" height="24" viewBox="0 0 22 24" preserveAspectRatio="none"><text x="11" y="10" text-anchor="middle" font-family="Liberation Sans" font-size="11.500" fill="#333" textLength="11" lengthAdjust="spacingAndGlyphs">F8</text><path d="M11 13v7" stroke="#444" stroke-width="1.100" fill="none"/></svg>
<svg style="left:1089px;top:64px;" width="22" height="24" viewBox="0 0 22 24" preserveAspectRatio="none"><text x="11" y="10" text-anchor="middle" font-family="Liberation Sans" font-size="11.500" fill="#333" textLength="14.5" lengthAdjust="spacingAndGlyphs">SF8</text><path d="M11 12.500v8" stroke="#444" stroke-width="1.100" fill="none" stroke-dasharray="1 1"/></svg>
<svg style="left:1117px;top:64px;" width="22" height="24" viewBox="0 0 22 24" preserveAspectRatio="none"><text x="11" y="10" text-anchor="middle" font-family="Liberation Sans" font-size="11.500" fill="#333" textLength="11" lengthAdjust="spacingAndGlyphs">F9</text><path d="M1 16.500h20" stroke="#444" stroke-width="1.100" fill="none"/></svg>
<svg style="left:1146px;top:64px;" width="22" height="24" viewBox="0 0 22 24" preserveAspectRatio="none"><text x="11" y="10" text-anchor="middle" font-family="Liberation Sans" font-size="11.500" fill="#333" textLength="14.5" lengthAdjust="spacingAndGlyphs">SF9</text><path d="M1 16.500h20" stroke="#444" stroke-width="1.100" fill="none" stroke-dasharray="1 1"/></svg>
<div style="left:1176px;top:64px;width:1px;height:27px;background:#c8c8c8"></div>
<svg style="left:8px;top:98px;" width="3" height="20" viewBox="0 0 3 20" preserveAspectRatio="none"><g fill="#b4b4b4"><rect x="0" y="1" width="2.500" height="2.500"/><rect x="0" y="6" width="2.500" height="2.500"/><rect x="0" y="11" width="2.500" height="2.500"/><rect x="0" y="16" width="2.500" height="2.500"/></g></svg>
<svg style="left:18px;top:97px;" width="22" height="22" viewBox="0 0 22 22" preserveAspectRatio="none"><path d="M14 2l4 3-6 8-4 1 .500-4z" fill="#b8b8b8"/><path d="M1 17.500h6M12 17.500h6M7 14v7M12 14v7" stroke="#999" stroke-width="1.100"/></svg>
<svg style="left:46px;top:97px;" width="22" height="22" viewBox="0 0 22 22" preserveAspectRatio="none"><circle cx="4" cy="5" r="2" fill="none" stroke="#999"/><path d="M9 5h10M9 11h10M9 17h10" stroke="#999" stroke-width="2"/><path d="M2 11h4" stroke="#999" stroke-width="1.500"/><path d="M2 15l4 4M6 15l-4 4" stroke="#999" stroke-width="1.200"/></svg>
<svg style="left:75px;top:97px;" width="22" height="22" viewBox="0 0 22 22" preserveAspectRatio="none"><g fill="none" stroke="#b4b4b4"><circle cx="4" cy="5" r="2"/><circle cx="4" cy="11" r="2"/><circle cx="4" cy="17" r="2"/></g><path d="M9 5h10M9 11h10M9 17h10" stroke="#b4b4b4" stroke-width="2"/></svg>
<svg style="left:104px;top:97px;" width="22" height="22" viewBox="0 0 22 22" preserveAspectRatio="none"><g fill="none" stroke="#333"><circle cx="4" cy="5" r="2"/><circle cx="4" cy="11" r="2"/><circle cx="4" cy="17" r="2"/></g><path d="M9 5h6M12 11h8M9 17h11" stroke="#333" stroke-width="1.800"/><path d="M18 1l3 3-9 9-4 1.500 1.500-4.500z" fill="#2fa84f"/><path d="M8 14.500l1.200-3.500 2.300 2.300z" fill="#e8c89a"/></svg>
<svg style="left:132px;top:97px;" width="22" height="22" viewBox="0 0 22 22" preserveAspectRatio="none"><rect x="1.500" y="2.500" width="18" height="17" fill="#f2f2f2" stroke="#aaa" stroke-width="1.200"/><path d="M1.500 5h18" stroke="#aaa" stroke-width="1.500"/><circle cx="6.500" cy="13" r="3" fill="none" stroke="#aaa" stroke-width="1.200"/><circle cx="14.500" cy="13" r="3" fill="none" stroke="#aaa" stroke-width="1.200"/><path d="M9.500 13h2M17 11l3-3" stroke="#aaa" stroke-width="1.200"/></svg>
<svg style="left:161px;top:97px;" width="22" height="22" viewBox="0 0 22 22" preserveAspectRatio="none"><rect x="1" y="3" width="20" height="17" fill="#c8c8c8"/><path d="M1 8.500h6v-5.500M11 3v5.500h5M16 8.500v6h5M6 14.500h5v5.500M1 14.500h2M11 8.500v3" stroke="#8a8a8a" stroke-width="2" fill="none"/><path d="M4 3v17M8 3v17M14 3v17M18 3v17" stroke="#e8e8e8" stroke-width="0.800" stroke-dasharray="1.500 1.500"/></svg>
<svg style="left:190px;top:97px;" width="22" height="22" viewBox="0 0 22 22" preserveAspectRatio="none"><rect x="1" y="2" width="9" height="14" fill="#333"/><path d="M2.500 13v-8l3 5 3-5v8" stroke="#9ab8e8" stroke-width="1.300" fill="none"/><path d="M0 15h11v2h-11z" fill="#222"/><rect x="10" y="4" width="11" height="17" fill="#3a3a3a"/><rect x="13" y="6" width="6" height="3" fill="#999"/><path d="M11 13h9M11 16h9" stroke="#888" stroke-width="1"/><rect x="17" y="17" width="3" height="4" fill="#ddd"/></svg>
<svg style="left:219px;top:97px;" width="22" height="22" viewBox="0 0 22 22" preserveAspectRatio="none"><path d="M2 4h18" stroke="#c4c4c4" stroke-width="1.200"/><rect x="8" y="2" width="6" height="4" fill="#c0c0c0"/><path d="M10 6h3v8l4 1.500q2 1 1 3l-1 2.500h-8l-4-5q0-1.500 2-.500l3 1.500z" fill="#d4d4d4"/></svg>
<svg style="left:247px;top:97px;" width="22" height="22" viewBox="0 0 22 22" preserveAspectRatio="none"><rect x="1.500" y="1.500" width="13" height="10" fill="#8fd0f0" stroke="#333" stroke-width="1.400"/><path d="M8 12v3M4 15.500h8" stroke="#333" stroke-width="1.400"/><circle cx="15.5" cy="15" r="5" fill="#fff" stroke="#555" stroke-width="1.500"/><path d="M15.5 15l2-3M15.5 10v-2M14.0 10h3" stroke="#555" stroke-width="1.300" fill="none"/></svg>
<svg style="left:276px;top:97px;" width="22" height="22" viewBox="0 0 22 22" preserveAspectRatio="none"><path d="M1.500 1.500h8l3.500 3.500v13h-11.500z" fill="#fff" stroke="#aaa"/><path d="M3 9h2.500M7.5 9h1.500M12 9h2M5.5 7.5v3M7.5 7.5v3" stroke="#555" stroke-width="0.900" fill="none"/><circle cx="10.5" cy="9" r="1.300" fill="none" stroke="#555" stroke-width="0.800"/><path d="M3 14h2.500M7.5 14h1.500M12 14h2M5.5 12.5v3M7.5 12.5v3" stroke="#555" stroke-width="0.900" fill="none"/><circle cx="10.5" cy="14" r="1.300" fill="none" stroke="#555" stroke-width="0.800"/><circle cx="15.5" cy="15" r="5" fill="#fff" stroke="#555" stroke-width="1.500"/><path d="M15.5 15l2-3M15.5 10v-2M14.0 10h3" stroke="#555" stroke-width="1.300" fill="none"/></svg>
<svg style="left:305px;top:97px;" width="22" height="22" viewBox="0 0 22 22" preserveAspectRatio="none"><rect x="1.500" y="1.500" width="14" height="11" fill="#8fd0f0" stroke="#333" stroke-width="1.400"/><path d="M8 13v3M4 16.500h8" stroke="#333" stroke-width="1.400"/><path d="M15 9l7 12h-14z" fill="#f5b52e"/><path d="M15 13v4.500" stroke="#333" stroke-width="1.400"/><circle cx="15" cy="19.200" r=".800" fill="#333"/></svg>
<svg style="left:334px;top:97px;" width="22" height="22" viewBox="0 0 22 22" preserveAspectRatio="none"><circle cx="11" cy="11" r="9.500" fill="#e6e6e6" stroke="#c8c8c8" stroke-width="1"/><circle cx="11" cy="11" r="6.500" fill="#aaaaaa"/></svg>
<svg style="left:363px;top:97px;" width="22" height="22" viewBox="0 0 22 22" preserveAspectRatio="none"><circle cx="11" cy="11" r="9.500" fill="#e6e6e6" stroke="#c8c8c8" stroke-width="1"/><circle cx="11" cy="11" r="6.500" fill="#aaaaaa"/></svg>
<svg style="left:391px;top:97px;" width="22" height="22" viewBox="0 0 22 22" preserveAspectRatio="none"><path d="M4 3.500l14 7.500-14 7.500z" fill="#aaaaaa"/></svg>
<svg style="left:420px;top:97px;" width="22" height="22" viewBox="0 0 22 22" preserveAspectRatio="none"><rect x="3.500" y="3.500" width="15" height="15" fill="#aaaaaa"/></svg>
<svg style="left:449px;top:97px;" width="22" height="22" viewBox="0 0 22 22" preserveAspectRatio="none"><rect x="4.500" y="3.500" width="4.500" height="15" fill="#aaaaaa"/><rect x="12.500" y="3.500" width="4.500" height="15" fill="#aaaaaa"/></svg>
<svg style="left:477px;top:97px;" width="22" height="22" viewBox="0 0 22 22" preserveAspectRatio="none"><rect x="1.500" y="3.500" width="2.500" height="15" fill="#aaaaaa"/><path d="M12 3.500v15l-8-7.500zM20 3.500v15l-8-7.500z" fill="#aaaaaa"/></svg>
<svg style="left:506px;top:97px;" width="22" height="22" viewBox="0 0 22 22" preserveAspectRatio="none"><path d="M11 4l7.500 14h-15z" fill="#aaaaaa"/></svg>
<svg style="left:535px;top:97px;" width="22" height="22" viewBox="0 0 22 22" preserveAspectRatio="none"><rect x="4.500" y="3.500" width="2.500" height="15" fill="#aaaaaa"/><path d="M16 3.500v15l-9-7.500z" fill="#aaaaaa"/></svg>
<svg style="left:563px;top:97px;" width="22" height="22" viewBox="0 0 22 22" preserveAspectRatio="none"><rect x="15" y="3.500" width="2.500" height="15" fill="#aaaaaa"/><path d="M6 3.500v15l9-7.500z" fill="#aaaaaa"/></svg>
<svg style="left:592px;top:97px;" width="22" height="22" viewBox="0 0 22 22" preserveAspectRatio="none"><path d="M11 18l7.500-14h-15z" fill="#aaaaaa"/></svg>
<svg style="left:621px;top:97px;" width="22" height="22" viewBox="0 0 22 22" preserveAspectRatio="none"><rect x="18" y="3.500" width="2.500" height="15" fill="#aaaaaa"/><path d="M2 3.500v15l8-7.500zM10 3.500v15l8-7.500z" fill="#aaaaaa"/></svg>
<svg style="left:650px;top:97px;" width="22" height="22" viewBox="0 0 22 22" preserveAspectRatio="none"><path d="M4 4.500l13 6.500-13 6.500" stroke="#aaaaaa" stroke-width="3" fill="none"/></svg>
<svg style="left:679px;top:97px;" width="22" height="22" viewBox="0 0 22 22" preserveAspectRatio="none"><circle cx="11" cy="11" r="9.500" fill="#bdbdbd"/><path d="M5.500 8h11l-5.500 8z" fill="#ececec"/></svg>
<svg style="left:707px;top:97px;" width="22" height="22" viewBox="0 0 22 22" preserveAspectRatio="none"><path d="M6 11v-6q1-1.500 2 0v-2q1-1.500 2 0v-1q1-1.500 2 0v2q1-1.500 2 0v9q0 4-2 6h-6q-3-3-5-7q1-2 3 0z" fill="#dcdcdc"/><path d="M8 5v5M10 3v7M12 4v6" stroke="#c4c4c4" stroke-width="0.800"/></svg>
<svg style="left:736px;top:97px;" width="22" height="22" viewBox="0 0 22 22" preserveAspectRatio="none"><rect x="1.500" y="1.500" width="12" height="9" fill="#d8d8d8" stroke="#aaa" stroke-width="1.400"/><path d="M7 11v3M3 14.500h8" stroke="#aaa" stroke-width="1.400"/><path d="M9 19h5v-5h5M17 12l2 2-2 2" stroke="#aaa" stroke-width="1.400" fill="none"/></svg>
<svg style="left:765px;top:97px;" width="22" height="22" viewBox="0 0 22 22" preserveAspectRatio="none"><circle cx="11" cy="13" r="7.500" fill="#f4f4f4" stroke="#aaa" stroke-width="1.700"/><path d="M11 13l3-4.500M11 5.500v-3M9 2h4" stroke="#aaa" stroke-width="1.600" fill="none"/></svg>
<svg style="left:794px;top:97px;" width="22" height="22" viewBox="0 0 22 22" preserveAspectRatio="none"><rect x="1" y="3" width="20" height="16" fill="#9a9a9a"/><text x="11" y="15" text-anchor="middle" font-family="Liberation Mono" font-size="10" font-weight="bold" fill="#e8e8e8" textLength="17" lengthAdjust="spacingAndGlyphs">12:00</text></svg>
<div style="left:825px;top:96px;width:1px;height:27px;background:#c8c8c8"></div>
<svg style="left:829px;top:98px;" width="3" height="20" viewBox="0 0 3 20" preserveAspectRatio="none"><g fill="#b4b4b4"><rect x="0" y="1" width="2.500" height="2.500"/><rect x="0" y="6" width="2.500" height="2.500"/><rect x="0" y="11" width="2.500" height="2.500"/><rect x="0" y="16" width="2.500" height="2.500"/></g></svg>
<div style="left:837px;top:94px;width:202px;height:29px;background:#fff"></div>
<div class="t" style="left:842px;top:100px;font-size:16px">编辑器</div>
<svg style="left:1023px;top:106px;" width="9" height="5" viewBox="0 0 9 5" preserveAspectRatio="none"><path d="M0 0h9l-4.500 5z" fill="#000"/></svg>
<div style="left:1041px;top:96px;width:1px;height:27px;background:#c8c8c8"></div>
<svg style="left:1048px;top:98px;" width="3" height="20" viewBox="0 0 3 20" preserveAspectRatio="none"><g fill="#b4b4b4"><rect x="0" y="1" width="2.500" height="2.500"/><rect x="0" y="6" width="2.500" height="2.500"/><rect x="0" y="11" width="2.500" height="2.500"/><rect x="0" y="16" width="2.500" height="2.500"/></g></svg>
<div class="t" style="left:1058px;top:100px;font-size:16px">注释</div>
<div style="left:1096px;top:94px;width:192px;height:29px;background:#fff"></div>
<div class="t" style="left:1101px;top:100px;font-size:16px">注释 1</div>
<svg style="left:1271px;top:106px;" width="9" height="5" viewBox="0 0 9 5" preserveAspectRatio="none"><path d="M0 0h9l-4.500 5z" fill="#000"/></svg>
<!-- g_dialog -->
<div style="left:613px;top:224px;width:857px;height:679px;background:#f0f0f0;border:1px solid #6b6b6b;box-shadow:0 5px 16px 2px rgba(0,0,0,.25),0 0 5px rgba(0,0,0,.10)"></div>
<div style="left:614px;top:225px;width:855px;height:38px;background:#fff"></div>
<div style="left:614px;top:263px;width:855px;height:1px;background:#c9d6ea"></div>
<svg style="left:624px;top:233px;" width="21" height="19" viewBox="0 0 21 16" preserveAspectRatio="none"><rect x="1" y="0" width="19" height="5" fill="#555"/><path d="M3 0v5M5.500 0v5M8 0v5M10.500 0v5M13 0v5M15.500 0v5M18 0v5" stroke="#999" stroke-width="0.800"/><path d="M1 5.500h-0.500v3h20v-3" stroke="#444" stroke-width="1.400" fill="none"/><path d="M0.500 8.500v3h20v-3" stroke="#444" stroke-width="1.400" fill="none"/><rect x="1" y="11.500" width="19" height="4.500" fill="#555"/><path d="M3 11.500v4.500M5.500 11.500v4.500M8 11.500v4.500M10.500 11.500v4.500M13 11.500v4.500M15.500 11.500v4.500M18 11.500v4.500" stroke="#999" stroke-width="0.800"/></svg>
<div class="t" style="left:649px;top:235.0px;font-size:15px;color:#000;">单元编辑器 - 编辑模式</div>
<svg style="left:1316px;top:236px;" width="132" height="15" viewBox="0 0 132 15" preserveAspectRatio="none"><path d="M0 7.500h12" stroke="#000" stroke-width="1.200"/><path d="M58.500 2.500h11.500v11.500h-11.500z" stroke="#000" stroke-width="1.200" fill="none"/><path d="M117 1.500l12 12M129 1.500l-12 12" stroke="#000" stroke-width="1.200"/></svg>
<div class="t" style="left:634px;top:269.0px;font-size:15px;color:#000;">文件(<u>F</u>)</div>
<div class="t" style="left:700px;top:269.0px;font-size:15px;color:#000;">编辑(<u>E</u>)</div>
<div class="t" style="left:768px;top:269.0px;font-size:15px;color:#000;">转换(<u>P</u>)</div>
<div class="t" style="left:835px;top:269.0px;font-size:15px;color:#000;">视图(<u>V</u>)</div>
<div class="t" style="left:904px;top:269.0px;font-size:15px;color:#000;">选项(<u>O</u>)</div>
<div class="t" style="left:975px;top:269.0px;font-size:15px;color:#000;">窗口(<u>W</u>)</div>
<div class="t" style="left:1049px;top:269.0px;font-size:15px;color:#000;">帮助(<u>H</u>)</div>
<svg style="left:628px;top:298px;" width="22" height="22" viewBox="0 0 22 22" preserveAspectRatio="none"><path d="M6.500 2.500h9l3.500 3.500v13h-12.500z" fill="#fff" stroke="#aaa"/><path d="M15.500 2.500v3.500h3.500" fill="#eee" stroke="#aaa"/><path d="M8 10h2.500M12.5 10h1.500M17 10h2M10.5 8.5v3M12.5 8.5v3" stroke="#555" stroke-width="0.900" fill="none"/><circle cx="15.5" cy="10" r="1.300" fill="none" stroke="#555" stroke-width="0.800"/><path d="M8 15h2.500M12.5 15h1.500M17 15h2M10.5 13.5v3M12.5 13.5v3" stroke="#555" stroke-width="0.900" fill="none"/><circle cx="15.5" cy="15" r="1.300" fill="none" stroke="#555" stroke-width="0.800"/><path d="M1 9h5v-3l5 5-5 5v-3h-5z" fill="#2f7fd6"/></svg>
<svg style="left:655px;top:298px;" width="22" height="22" viewBox="0 0 22 22" preserveAspectRatio="none"><rect x="2" y="9.5" width="13" height="11" fill="#3c3c3c"/><rect x="3.5" y="11.0" width="4" height="3" fill="#57d36b"/><rect x="9" y="10.5" width="1.500" height="2" fill="#57d36b"/><rect x="12" y="10.5" width="1.500" height="2" fill="#57d36b"/><rect x="6" y="16.5" width="2" height="2" fill="#e08030"/><path d="M8.5 9.5v11M11.5 9.5v11" stroke="#222" stroke-width="0.800"/><path d="M20.500 11a5.500 5.500 0 0 0-7-5.500" stroke="#2f7fd6" stroke-width="2.300" fill="none"/><path d="M9.500 7l5.500-5 .500 7z" fill="#2f7fd6"/></svg>
<div style="left:686px;top:295px;width:1px;height:28px;background:#c4c4c4"></div>
<svg style="left:693px;top:298px;" width="22" height="22" viewBox="0 0 22 22" preserveAspectRatio="none"><rect x="9.500" y="2.500" width="11" height="9" fill="#8fd0f0" stroke="#444" stroke-width="1.300"/><path d="M15 12v2M12 14.500h6" stroke="#444" stroke-width="1.300"/><rect x="1" y="11" width="13" height="11" fill="#3c3c3c"/><rect x="2.5" y="12.5" width="4" height="3" fill="#57d36b"/><rect x="8" y="12" width="1.500" height="2" fill="#57d36b"/><rect x="11" y="12" width="1.500" height="2" fill="#57d36b"/><rect x="5" y="18" width="2" height="2" fill="#e08030"/><path d="M7.5 11v11M10.5 11v11" stroke="#222" stroke-width="0.800"/><path d="M2.500 10v-1.500a4 4 0 0 1 4-4h2" stroke="#2f7fd6" stroke-width="2.200" fill="none"/><path d="M7.500 1l4.500 3.500-4.500 3.500z" fill="#2f7fd6"/></svg>
<div style="left:723px;top:295px;width:1px;height:28px;background:#c4c4c4"></div>
<svg style="left:730px;top:298px;" width="22" height="22" viewBox="0 0 22 22" preserveAspectRatio="none"><path d="M6 2l7 13M16 2l-7 13" stroke="#bdbdbd" stroke-width="1.800"/><circle cx="6.500" cy="17.500" r="2.800" fill="none" stroke="#bdbdbd" stroke-width="1.600"/><circle cx="15.500" cy="17.500" r="2.800" fill="none" stroke="#bdbdbd" stroke-width="1.600"/></svg>
<svg style="left:758px;top:298px;" width="22" height="22" viewBox="0 0 22 22" preserveAspectRatio="none"><path d="M3.500 2.500h6l3 3v9h-9z" fill="#f6f6f6" stroke="#c4c4c4"/><path d="M5.500 7h5M5.500 9.500h5M5.500 12h5" stroke="#d0d0d0" stroke-width="1"/><path d="M9.500 7.500h6l3 3v10h-9z" fill="#f6f6f6" stroke="#c4c4c4"/><path d="M11.500 13h5M11.500 15.500h5M11.500 18h5" stroke="#d0d0d0" stroke-width="1"/></svg>
<svg style="left:786px;top:298px;" width="22" height="22" viewBox="0 0 22 22" preserveAspectRatio="none"><rect x="2" y="4" width="12" height="15" fill="#cfcfcf"/><rect x="6" y="2" width="4" height="4" fill="#c4c4c4"/><path d="M9.500 8.500h7l3 3v9h-10z" fill="#f2f2f2" stroke="#c4c4c4"/><path d="M11.500 13.500h6M11.500 16h6M11.500 18.500h6" stroke="#d0d0d0" stroke-width="1"/></svg>
<div style="left:816px;top:295px;width:1px;height:28px;background:#c4c4c4"></div>
<svg style="left:822px;top:298px;" width="22" height="22" viewBox="0 0 22 22" preserveAspectRatio="none"><rect x="2.500" y="4.500" width="14" height="16" fill="#fff" stroke="#666" stroke-width="1.200"/><path d="M5 13h7M5 15.500h9M5 18h9" stroke="#3b84e8" stroke-width="1.300"/><path d="M19 1l3 3-9 9-4 1.500 1.500-4.500z" fill="#2fa84f"/><path d="M9 14.500l1.200-3.500 2.300 2.300z" fill="#e8c89a"/><path d="M9 14.500l.600-1.500 1 1z" fill="#333"/></svg>
<svg style="left:850px;top:298px;" width="22" height="22" viewBox="0 0 22 22" preserveAspectRatio="none"><rect x="1" y="3" width="20" height="17" fill="#b8b8b8"/><rect x="2" y="4" width="8" height="5" fill="#c8c8c8"/><path d="M11 3v17M14.500 3v17M18 3v17" stroke="#a4a4a4" stroke-width="1"/><path d="M1 12h10" stroke="#a4a4a4" stroke-width="1"/></svg>
<div style="left:881px;top:295px;width:1px;height:28px;background:#c4c4c4"></div>
<svg style="left:888px;top:298px;" width="22" height="22" viewBox="0 0 22 22" preserveAspectRatio="none"><circle cx="10.500" cy="10.500" r="9.500" fill="#fff" stroke="#2a4aa8" stroke-width="1.600"/><text x="4" y="9.5" font-family="Liberation Sans" font-size="7" font-weight="bold" fill="#444" textLength="13" lengthAdjust="spacingAndGlyphs">DM</text><text x="4" y="16.5" font-family="Liberation Sans" font-size="7" font-weight="bold" fill="#444" textLength="13" lengthAdjust="spacingAndGlyphs">RLY</text><path d="M14 15l7 6v-5z" fill="#1a2a88"/></svg>
<svg style="left:914px;top:298px;" width="22" height="22" viewBox="0 0 22 22" preserveAspectRatio="none"><rect x="1" y="7" width="12" height="14" fill="#e4e4e4"/><text x="1.5" y="13.5" font-family="Liberation Sans" font-size="7" font-weight="bold" fill="#444" textLength="9" lengthAdjust="spacingAndGlyphs">DM</text><text x="1.5" y="20.5" font-family="Liberation Sans" font-size="7" font-weight="bold" fill="#444" textLength="11" lengthAdjust="spacingAndGlyphs">RLY</text><path d="M19 1l3 3-9 9-4 1.500 1.500-4.500z" fill="#2fa84f"/><path d="M9 14.500l1.200-3.500 2.300 2.300z" fill="#e8c89a"/></svg>
<svg style="left:942px;top:298px;" width="22" height="22" viewBox="0 0 22 22" preserveAspectRatio="none"><rect x="2.500" y="4.500" width="15" height="15" fill="#fff" stroke="#aaa"/><text x="4" y="11" font-family="Liberation Sans" font-size="7" font-weight="bold" fill="#444" textLength="8" lengthAdjust="spacingAndGlyphs">DM</text><text x="4" y="17.5" font-family="Liberation Sans" font-size="7" font-weight="bold" fill="#444" textLength="11" lengthAdjust="spacingAndGlyphs">RLY</text><path d="M6 10l4 5 9-10" stroke="#e02030" stroke-width="2.600" fill="none"/></svg>
<svg style="left:971px;top:298px;" width="22" height="22" viewBox="0 0 22 22" preserveAspectRatio="none"><path d="M5 14a6 6 0 1 1 9-8" stroke="#c8c8c8" stroke-width="1.600" fill="none"/><path d="M12 2l4 4-5 1z" fill="#c8c8c8"/><path d="M3 9h7M3 12h5" stroke="#c8c8c8" stroke-width="1.300"/><circle cx="15.500" cy="15.500" r="5" fill="#d4d4d4"/><path d="M13.500 13.500l4 4M17.500 13.500l-4 4" stroke="#fff" stroke-width="1.500"/></svg>
<div style="left:1001px;top:295px;width:1px;height:28px;background:#c4c4c4"></div>
<svg style="left:1006px;top:298px;" width="22" height="22" viewBox="0 0 22 22" preserveAspectRatio="none"><rect x="6" y="2" width="10" height="11" fill="#b4b4b4"/><rect x="7.5" y="3.500" width="7" height="3" fill="#d0d0d0"/><path d="M11 13v3M5 16h12M5 16v3M11 16v3M17 16v3" stroke="#b4b4b4" stroke-width="1.500" fill="none"/><path d="M3.5 19.500h3M9.5 19.500h3M15.5 19.500h3" stroke="#b4b4b4" stroke-width="2"/></svg>
<svg style="left:1034px;top:298px;" width="22" height="22" viewBox="0 0 22 22" preserveAspectRatio="none"><rect x="4" y="2" width="10" height="11" fill="#b4b4b4"/><rect x="5.5" y="3.500" width="7" height="3" fill="#d0d0d0"/><path d="M9 13v3M3 16h12M3 16v3M9 16v3M15 16v3" stroke="#b4b4b4" stroke-width="1.500" fill="none"/><path d="M1.5 19.500h3M7.5 19.500h3M13.5 19.500h3" stroke="#b4b4b4" stroke-width="2"/><path d="M15 7a4 4 0 0 1 5 4" stroke="#c4c4c4" stroke-width="1.500" fill="none"/></svg>
<svg style="left:1062px;top:298px;" width="22" height="22" viewBox="0 0 22 22" preserveAspectRatio="none"><path d="M3.500 2.500h6l3 3v8h-9z" fill="#f6f6f6" stroke="#d0d0d0"/><path d="M9.500 8.500h6l3 3v8h-9z" fill="#f6f6f6" stroke="#d0d0d0"/><path d="M11.500 13h5M11.500 15.500h5" stroke="#d8d8d8" stroke-width="1"/><path d="M3 14v6M7 14l-4 3 4 3" stroke="#d8d8d8" stroke-width="1.200" fill="none"/></svg>
<svg style="left:1090px;top:298px;" width="22" height="22" viewBox="0 0 22 22" preserveAspectRatio="none"><rect x="3" y="4" width="12" height="12" fill="#d4d4d4"/><rect x="7" y="2" width="4" height="4" fill="#c8c8c8"/><path d="M9.500 9.500h9v10h-9z" fill="#f6f6f6" stroke="#d0d0d0"/><path d="M11.500 13h5M11.500 15.500h5" stroke="#d8d8d8" stroke-width="1"/><path d="M2 14v6M6 14l-4 3 4 3" stroke="#d8d8d8" stroke-width="1.200" fill="none"/></svg>
<svg style="left:1118px;top:298px;" width="22" height="22" viewBox="0 0 22 22" preserveAspectRatio="none"><rect x="1" y="2" width="20" height="19" fill="#c0c0c0"/><path d="M3 6h16M3 9h16" stroke="#cdcdcd" stroke-width="1" stroke-dasharray="2 1"/><text x="11" y="18.500" text-anchor="middle" font-family="Liberation Sans" font-size="9" font-weight="bold" fill="#ececec">KL</text></svg>
<div style="left:1148px;top:295px;width:1px;height:28px;background:#c4c4c4"></div>
<svg style="left:1155px;top:298px;" width="22" height="22" viewBox="0 0 22 22" preserveAspectRatio="none"><path d="M2 5a4.500 4.500 0 0 0 6 4l10 11q2 1 3-1l-10-11a4.500 4.500 0 0 0-4-6.500l2 3.500-3 2.500z" fill="#555"/></svg>
<div style="left:1180px;top:296px;width:28px;height:27px;background:#cce4f7;border:1.500px solid #2a8ae0"></div>
<svg style="left:1183px;top:298px;" width="22" height="22" viewBox="0 0 22 22" preserveAspectRatio="none"><path d="M3 2v6" stroke="#e04040" stroke-width="2"/><path d="M6 2v6" stroke="#f0a020" stroke-width="2"/><path d="M9 2v6" stroke="#40a040" stroke-width="2"/><path d="M4.500 10v7h5" stroke="#e03030" stroke-width="1.500" fill="none"/><path d="M2.500 12l2-3 2 3zM8 15l3 2-3 2z" fill="#e03030"/><rect x="9" y="6" width="12" height="15" fill="#3a3a3a"/><rect x="11" y="8" width="8" height="4" fill="#57d36b"/><rect x="16" y="16" width="2" height="2" fill="#e0a030"/></svg>
<div style="left:1213px;top:295px;width:1px;height:28px;background:#c4c4c4"></div>
<svg style="left:1220px;top:298px;" width="22" height="22" viewBox="0 0 22 22" preserveAspectRatio="none"><circle cx="11" cy="11" r="10" fill="#2f7fd0"/><path d="M7.500 8.500a3.600 3.600 0 1 1 5.500 3q-2 1.200-2 3.300" stroke="#fff" stroke-width="2.300" fill="none"/><circle cx="11" cy="18" r="1.500" fill="#fff"/></svg>
<div style="left:616px;top:328px;width:449px;height:316px;background:#0044ab;overflow:hidden"><div class="t" style="left:4px;top:40.5px;font-size:12.5px;color:#fff;letter-spacing:3px">宽:</div><div class="t m" style="left:42px;top:40.5px;font-size:13px;color:#fff;transform:scaleX(.8333);transform-origin:0 0">187<span style="font-size:10px">mm</span></div><div class="t" style="left:4px;top:56.5px;font-size:12.5px;color:#fff;letter-spacing:3px">高:</div><div class="t m" style="left:42px;top:56.5px;font-size:13px;color:#fff;transform:scaleX(.8333);transform-origin:0 0"> 90<span style="font-size:10px">mm</span></div><div class="t" style="left:4px;top:72.5px;font-size:12.5px;color:#fff;letter-spacing:3px">深:</div><div class="t m" style="left:42px;top:72.5px;font-size:13px;color:#fff;transform:scaleX(.8333);transform-origin:0 0"> 97<span style="font-size:10px">mm</span></div><div class="t" style="left:4px;top:88.5px;font-size:12.5px;color:#fff;letter-spacing:3px">消耗电流:</div><div class="t m" style="left:87px;top:88.5px;font-size:13px;color:#fff;transform:scaleX(.8333);transform-origin:0 0">730<span style="font-size:10px">mA</span></div><div class="t" style="left:4px;top:104.5px;font-size:12.5px;color:#fff;letter-spacing:3px">重量:</div><div class="t m" style="left:57px;top:104.5px;font-size:13px;color:#fff;transform:scaleX(.8333);transform-origin:0 0">780<span style="font-size:10px">g</span></div><div class="t m" style="left:218px;top:22px;font-size:13px;color:#fff">0</div><div class="t m" style="left:300px;top:22px;font-size:13px;color:#fff">1</div><div class="t m" style="left:346px;top:22px;font-size:13px;color:#fff">2</div><div class="t m" style="left:396px;top:22px;font-size:13px;color:#fff">3</div><svg style="left:163px;top:37px" width="290" height="140" viewBox="0 0 290 140">
<rect x="0" y="0" width="274" height="137" fill="#000"/>
<!-- CPU module 0..120 -->
<rect x="1" y="1" width="118" height="135" fill="#333"/>
<path d="M1 1h8l-8 12z M1 136h8l-8-12z" fill="#0044ab"/>
<rect x="9" y="1" width="2" height="135" fill="#555"/>
<rect x="11" y="2" width="80" height="54" fill="#1a1a1a" stroke="#777" stroke-width="1"/>
<rect x="17" y="9" width="57" height="40" fill="#0c0c0c" stroke="#b8a98a" stroke-width="1.200"/>
<rect x="22" y="13" width="47" height="31" fill="#1e5a1e"/>
<path d="M22 13h47l-30 16h-17z" fill="#3c7a3c" opacity=".7"/>
<path d="M22 13h25l-14 8h-11z" fill="#8fbf8f" opacity=".5"/>
<path d="M14 4h18" stroke="#ddd" stroke-width="2"/><path d="M62 5h10" stroke="#aaa" stroke-width="1.500"/>
<path d="M78 8v42M82 8v42M86 8v42" stroke="#4a4238" stroke-width="2" stroke-dasharray="1.500 1.500"/>
<rect x="77" y="33" width="2" height="2" fill="#d22"/><rect x="85" y="29" width="2" height="2" fill="#d22"/><rect x="77" y="44" width="2" height="2" fill="#d22"/>
<path d="M30 51h36" stroke="#999" stroke-width="1" stroke-dasharray="2 1"/><path d="M30 54h36" stroke="#777" stroke-width="1" stroke-dasharray="1 2"/>
<rect x="15" y="52" width="2" height="2" fill="#3c3"/><path d="M18 53h8" stroke="#aaa" stroke-width="1.500"/>
<rect x="10" y="56" width="23" height="80" fill="#353535"/>
<path d="M11 58h22v20h-22z M11 80h22v56h-22z" fill="#3d3d3d" stroke="#5a5a5a" stroke-width="1"/>
<rect x="27" y="60" width="4" height="18" fill="#666"/><rect x="27" y="82" width="4" height="20" fill="#666"/>
<rect x="33" y="56" width="5" height="80" fill="#111"/>
<rect x="38" y="58" width="53" height="78" fill="#404040" stroke="#555" stroke-width="1"/>
<g fill="#15151f" stroke="#555" stroke-width="1"><circle cx="49" cy="68" r="5.500"/><circle cx="65" cy="68" r="5.500"/><circle cx="49" cy="85" r="5.500"/><circle cx="65" cy="85" r="5.500"/><circle cx="81" cy="85" r="5.500"/></g>
<path d="M46 69l1.500-2.500 1.500 2 1.500-2 1.500 2.500" stroke="#779" fill="none" stroke-width="1"/><path d="M62 70l3-3.500 3 3.500z" fill="#779"/><path d="M62 84l3 3.500 3-3.500z" fill="#779"/><path d="M46 85h6M46 85l2-1.500M52 85l-2-1.500" stroke="#779" stroke-width="1" fill="none"/><circle cx="81" cy="85" r="2.500" fill="none" stroke="#779"/>
<path d="M46 98h6" stroke="#779" stroke-width="1.200"/><rect x="56" y="97" width="4" height="2" fill="#e22"/><path d="M66 98h5" stroke="#7a7" stroke-width="1"/><rect x="73" y="97" width="5" height="2" fill="#3c3"/><path d="M80 98h5" stroke="#7a7" stroke-width="1"/><rect x="86" y="97" width="4" height="2" fill="#3c3"/>
<rect x="43" y="103" width="22" height="33" fill="#333" stroke="#777" stroke-width="1"/>
<rect x="70" y="104" width="19" height="29" fill="#8a8a8a" stroke="#aaa" stroke-width="1"/><path d="M73 108h14v22h-8l-6-7z" fill="#101010"/><path d="M80 110h8M80 113h8M80 116h8M80 119h8M80 122h8M80 125h8" stroke="#666" stroke-width="1.200"/><path d="M71 121l8 10" stroke="#59c" stroke-width="1"/><path d="M71 134h18" stroke="#668" stroke-width="1" stroke-dasharray="1 1"/>
<rect x="93" y="1" width="27" height="135" fill="#353535"/><rect x="93" y="1" width="2" height="135" fill="#5a5a5a"/><path d="M95 9h24" stroke="#666" stroke-width="1"/><path d="M95 11h24" stroke="#222" stroke-width="1"/>
<rect x="98" y="18" width="16" height="115" fill="#2a2a2a" stroke="#4a4a4a"/><rect x="101" y="20" width="10" height="111" fill="#333" stroke="#1a1a1a"/>
<rect x="102" y="21" width="8" height="7" fill="#ffffc0"/><rect x="102" y="29" width="8" height="5" fill="#c8c890"/><rect x="102" y="114" width="8" height="5" fill="#c8c890"/><rect x="102" y="121" width="8" height="7" fill="#ffffc0"/>
<rect x="0.500" y="0.500" width="119.500" height="136" fill="none" stroke="#e01020" stroke-width="1.200"/>
<!-- module 1: 120..165 -->
<rect x="121" y="1" width="43" height="92" fill="#343434"/><rect x="121" y="93" width="43" height="43" fill="#000"/>
<path d="M121 9.500h43" stroke="#777" stroke-width="1"/><path d="M121 12h43" stroke="#999" stroke-width="1.200"/><path d="M133 12l3-4h12l3 4z" fill="#3a9a3a"/><path d="M136 4h12" stroke="#667" stroke-width="1.500" stroke-dasharray="1.500 1"/>
<rect x="133" y="21" width="4" height="2" fill="#3c3"/><rect x="139" y="21" width="4" height="2" fill="#3c3"/><rect x="149" y="21" width="4" height="2" fill="#3c3"/>
<path d="M134 26l2 1.500-2 1.500M139 26l2 1.500-2 1.500M149 26l2 1.500-2 1.500" stroke="#668" fill="none" stroke-width="1"/>
<path d="M125 65h9" stroke="#668" stroke-width="1.500" stroke-dasharray="2 1"/><rect x="127" y="69" width="5" height="12" fill="#ddd" stroke="#888"/><rect x="128" y="70" width="3" height="5" fill="#777"/>
<rect x="122" y="70" width="2" height="11" fill="#446"/>
<g fill="#9a9a9a" stroke="#ccc" stroke-width="1"><rect x="133" y="108" width="11" height="11"/><rect x="145" y="108" width="11" height="11"/><rect x="139" y="122" width="11" height="11"/></g>
<path d="M135 110l7 7M142 110l-7 7M147 110l7 7M154 110l-7 7M141 124l7 7M148 124l-7 7" stroke="#333" stroke-width="1.200"/>
<!-- module 2: 165..211 -->
<rect x="165" y="0" width="1.500" height="137" fill="#111"/>
<rect x="166.500" y="1" width="44" height="135" fill="#343434"/>
<path d="M167 9.500h43" stroke="#777" stroke-width="1"/><path d="M167 12h43" stroke="#999" stroke-width="1.200"/><path d="M179 12l3-4h12l3 4z" fill="#3a9a3a"/><path d="M182 4h12" stroke="#667" stroke-width="1.500" stroke-dasharray="1.500 1"/>
<path d="M168 20h14" stroke="#99a" stroke-width="2.500" stroke-dasharray="2 1"/>
<rect x="169" y="24" width="15" height="110" fill="#2a2a2a" stroke="#4a4a4a"/>
<rect x="173" y="26" width="7" height="7" fill="#ffffc0"/><rect x="173" y="34" width="7" height="5" fill="#c8c890"/><rect x="173" y="115" width="7" height="5" fill="#c8c890"/><rect x="173" y="122" width="7" height="7" fill="#ffffc0"/>
<path d="M175 42v70M178.500 42v70" stroke="#999" stroke-width="1.500" stroke-dasharray="1.500 1.500"/>
<path d="M186 24l3-4h20" stroke="#666" stroke-width="1" fill="none"/><rect x="187" y="24" width="23" height="112" fill="#383838" stroke="#4a4a4a"/>
<path d="M193 29h11M193 40h11" stroke="#557" stroke-width="3" stroke-dasharray="2 1.500"/><rect x="197" y="33" width="3" height="2" fill="#3c3"/><rect x="197" y="44" width="3" height="2" fill="#3c3"/>
<path d="M191 82h14M191 85h14" stroke="#557" stroke-width="1.500" stroke-dasharray="1.500 1"/><path d="M188 91h10v3h-10z" fill="#222"/><rect x="206" y="88" width="3" height="5" fill="#555"/><rect x="206" y="130" width="3" height="3" fill="#555"/>
<!-- module 3: 211..264 -->
<rect x="211" y="0" width="1.500" height="137" fill="#111"/>
<rect x="212.500" y="1" width="51" height="135" fill="#343434"/>
<path d="M213 9.500h50" stroke="#777" stroke-width="1"/><path d="M213 12h50" stroke="#999" stroke-width="1.200"/><path d="M228 12l3-4h12l3 4z" fill="#3a9a3a"/><path d="M231 4h12" stroke="#667" stroke-width="1.500" stroke-dasharray="1.500 1"/>
<path d="M215 21h9M215 26h9" stroke="#557" stroke-width="1" stroke-dasharray="1.500 1"/>
<path d="M228 21h20M228 26h9" stroke="#3c3" stroke-width="2" stroke-dasharray="3.500 2"/>
<rect x="251" y="19" width="5" height="12" fill="#ccc" stroke="#888"/><rect x="252.500" y="21" width="2" height="8" fill="#555"/><path d="M259 20v10" stroke="#557" stroke-width="2" stroke-dasharray="2 1"/><path d="M250 34h8" stroke="#557" stroke-width="1.500" stroke-dasharray="1.500 1"/>
<rect x="230" y="39" width="21" height="47" fill="#bdbdbd" stroke="#e0e0e0"/><rect x="250" y="39" width="2" height="47" fill="#777"/>
<circle cx="241" cy="45" r="3.500" fill="#111" stroke="#eee"/><circle cx="241" cy="81" r="3.500" fill="#111" stroke="#eee"/>
<path d="M236 53h10l-1 21h-8z" fill="#1a1a1a" stroke="#444"/><path d="M239 57v14M243 59v10" stroke="#777" stroke-width="1" stroke-dasharray="1 2"/>
<rect x="218" y="97" width="40" height="39" fill="#000"/>
<g fill="#9a9a9a" stroke="#ccc" stroke-width="1"><rect x="220" y="92" width="11" height="11"/><rect x="232" y="92" width="11" height="11"/><rect x="244" y="92" width="11" height="11"/><rect x="226" y="105" width="11" height="11"/><rect x="238" y="105" width="11" height="11"/></g>
<path d="M222 94l7 7M229 94l-7 7M234 94l7 7M241 94l-7 7M246 94l7 7M253 94l-7 7M228 107l7 7M235 107l-7 7M240 107l7 7M247 107l-7 7" stroke="#333" stroke-width="1.200"/>
<!-- end cap -->
<path d="M264 0h6l4 12v113l-4 12h-6z" fill="#333"/><path d="M266 2v133" stroke="#666" stroke-width="1"/><path d="M272 14v110" stroke="#555" stroke-width="1.500" stroke-dasharray="1 1"/>
<path d="M270 0h4v12z M270 137h4v-12z" fill="#0044ab"/>
<!-- next empty slot -->
<path d="M286 0.500h-11.500v136h11.500" fill="none" stroke="#10203a" stroke-width="1"/><path d="M275 136.500h11" stroke="#4a8a9a" stroke-width="1"/>
</svg><div style="left:163px;top:260px;width:93px;height:60px;border:1px solid #10203a;border-right-color:#4a8a9a"></div></div>
<div style="left:614px;top:326px;width:473px;height:1px;background:#a0a0a0"></div>
<div style="left:614px;top:326px;width:1px;height:340px;background:#a0a0a0"></div>
<div style="left:615px;top:327px;width:471px;height:1px;background:#696969"></div>
<div style="left:615px;top:327px;width:1px;height:338px;background:#696969"></div>
<div style="left:1065px;top:328px;width:22px;height:316px;background:#f0f0f0"></div>
<div style="left:1068px;top:350px;width:18px;height:193px;background:#cdcdcd"></div>
<svg style="left:1070px;top:335px;" width="12" height="8" viewBox="0 0 12 8" preserveAspectRatio="none"><path d="M1 7l5-5 5 5" stroke="#505050" stroke-width="2" fill="none"/></svg>
<svg style="left:1070px;top:629px;" width="12" height="8" viewBox="0 0 12 8" preserveAspectRatio="none"><path d="M1 1l5 5 5-5" stroke="#505050" stroke-width="2" fill="none"/></svg>
<div style="left:615px;top:644px;width:451px;height:21px;background:#f0f0f0"></div>
<div style="left:638px;top:646px;width:315px;height:17px;background:#cdcdcd"></div>
<svg style="left:622px;top:649px;" width="8" height="12" viewBox="0 0 8 12" preserveAspectRatio="none"><path d="M7 1l-5 5 5 5" stroke="#505050" stroke-width="2" fill="none"/></svg>
<svg style="left:1050px;top:649px;" width="8" height="12" viewBox="0 0 8 12" preserveAspectRatio="none"><path d="M1 1l5 5-5 5" stroke="#505050" stroke-width="2" fill="none"/></svg>
<div style="left:1066px;top:644px;width:21px;height:21px;background:#f0f0f0"></div>
<div style="left:1087px;top:327px;width:1px;height:340px;background:#fff"></div>
<div style="left:614px;top:665px;width:474px;height:1px;background:#fff"></div>
<div style="left:1094px;top:326px;width:374px;height:31px;background:#f0f0f0;border:1px solid #a0a0a0;border-radius:2px"></div>
<div class="t" style="left:1099px;top:333.0px;font-size:15px;color:#000;">单元</div>
<svg style="left:1452px;top:336px;" width="10" height="12" viewBox="0 0 10 12" preserveAspectRatio="none"><path d="M2.500 1h5M3.500 1v5.500M6.500 1v5.500M1 6.500h8M5 6.500v5" stroke="#000" stroke-width="1.300" fill="none"/><path d="M5.500 1.500h1.500v5h-1.500z" fill="#000"/></svg>
<div class="t" style="left:1104px;top:366.0px;font-size:15px;color:#8e8e8e;">选择单元(<u>1</u>)</div>
<div style="left:1208px;top:362px;width:110px;height:26px;background:#f8f8f8"></div>
<div class="t" style="left:1215px;top:366.0px;font-size:15px;color:#000;">设定单元(<u>2</u>)</div>
<div style="left:1318px;top:363px;width:1px;height:25px;background:#000"></div>
<div style="left:1094px;top:388px;width:374px;height:279px;background:#f0f0f0;border:1px solid #a8a8a8;border-top:2px solid #dcdcdc"></div>
<svg style="left:1100px;top:394px;" width="22" height="22" viewBox="0 0 22 22" preserveAspectRatio="none"><rect x="1.500" y="1.500" width="7" height="7" fill="#fff" stroke="#999"/><path d="M3 5h4" stroke="#555" stroke-width="1.200"/><path d="M9 5h10M12.500 5v14.500M12.500 10h6M12.500 15h6M12.500 19.500h6" stroke="#6a6a4a" stroke-width="1.600" fill="none"/><path d="M5 11v8" stroke="#2f7fd6" stroke-width="1.600"/><path d="M2 16.500l3 4 3-4z" fill="#2f7fd6"/></svg>
<svg style="left:1129px;top:394px;" width="22" height="22" viewBox="0 0 22 22" preserveAspectRatio="none"><rect x="1.500" y="1.500" width="7" height="7" fill="#fff" stroke="#999"/><path d="M3 5h4M5 3v4" stroke="#555" stroke-width="1.200"/><path d="M11 4h8M11 7.500h8" stroke="#6a6a4a" stroke-width="1.600"/><path d="M5 13v8" stroke="#2f7fd6" stroke-width="1.600"/><path d="M2 15l3-4 3 4z" fill="#2f7fd6"/></svg>
<svg style="left:1158px;top:394px;" width="22" height="22" viewBox="0 0 22 22" preserveAspectRatio="none"><rect x="2" y="4.500" width="18" height="13" fill="#fff" stroke="#aaa" stroke-width="1.200"/><path d="M6 7l5 5 5-5" stroke="#a8d8a8" stroke-width="1.200" fill="none"/></svg>
<svg style="left:1187px;top:394px;" width="22" height="22" viewBox="0 0 22 22" preserveAspectRatio="none"><rect x="1.500" y="2.500" width="16" height="11" fill="#fff" stroke="#aaa" stroke-width="1.200"/><path d="M5 5l4 4" stroke="#a8d8a8" stroke-width="1.200"/><rect x="10" y="8" width="11" height="12" fill="#3c3c5a"/><rect x="11.5" y="9.5" width="6" height="3.500" fill="#57d36b"/><rect x="14" y="16" width="1.500" height="1.500" fill="#e08030"/><rect x="16.5" y="16" width="1.500" height="1.500" fill="#e0c030"/><rect x="19" y="8" width="2" height="12" fill="#2a2a44"/></svg>
<svg style="left:1216px;top:394px;" width="22" height="22" viewBox="0 0 22 22" preserveAspectRatio="none"><circle cx="12" cy="13" r="7" fill="none" stroke="#20b8c8" stroke-width="2"/><rect x="1" y="2" width="11" height="13" fill="#3c3c5a"/><rect x="2.5" y="3.5" width="6" height="3.500" fill="#57d36b"/><rect x="5" y="10" width="1.500" height="1.500" fill="#e08030"/><rect x="7.5" y="10" width="1.500" height="1.500" fill="#e0c030"/><rect x="10" y="2" width="2" height="13" fill="#2a2a44"/><rect x="14" y="9" width="7" height="12" fill="#777"/><rect x="16" y="10" width="2" height="5" fill="#3c3"/><path d="M14 16h7" stroke="#444" stroke-width="1"/></svg>
<svg style="left:1244px;top:394px;" width="22" height="22" viewBox="0 0 22 22" preserveAspectRatio="none"><rect x="0.500" y="8" width="15" height="8.500" fill="#f08c1e"/><text x="8" y="15" text-anchor="middle" font-family="Liberation Sans" font-size="7.500" font-weight="bold" fill="#fff">FTP</text><path d="M15 4a3 3 0 0 0 1.500 5v11h2.500v-11a3 3 0 0 0 1-5v3h-3z" fill="#999"/></svg>
<svg style="left:1273px;top:394px;" width="22" height="22" viewBox="0 0 22 22" preserveAspectRatio="none"><rect x="1" y="2" width="11" height="11" fill="#3c3c5a"/><rect x="2.5" y="3.5" width="6" height="3.500" fill="#57d36b"/><rect x="5" y="10" width="1.500" height="1.500" fill="#e08030"/><rect x="7.5" y="10" width="1.500" height="1.500" fill="#e0c030"/><rect x="10" y="2" width="2" height="11" fill="#2a2a44"/><path d="M2 14.500h19" stroke="#2f7fd6" stroke-width="1.800"/><g fill="#2f7fd6"><rect x="15" y="7" width="4.500" height="3.500"/><rect x="2" y="17" width="4.500" height="3.500"/><rect x="8.500" y="17" width="4.500" height="3.500"/><rect x="15" y="17" width="4.500" height="3.500"/></g><path d="M17 10.500v4M4.500 14.500v3M10.500 14.500v3M17 14.500v3" stroke="#2f7fd6" stroke-width="1.200"/></svg>
<svg style="left:1302px;top:394px;" width="22" height="22" viewBox="0 0 22 22" preserveAspectRatio="none"><circle cx="11" cy="13" r="6.500" fill="none" stroke="#90e090" stroke-width="1.800"/><rect x="1" y="2" width="11" height="13" fill="#3c3c5a"/><rect x="2.5" y="3.5" width="6" height="3.500" fill="#57d36b"/><rect x="5" y="10" width="1.500" height="1.500" fill="#e08030"/><rect x="7.5" y="10" width="1.500" height="1.500" fill="#e0c030"/><rect x="10" y="2" width="2" height="13" fill="#2a2a44"/><rect x="15" y="8" width="6" height="13" fill="#3c3c6a"/><rect x="16.500" y="10" width="2" height="1.500" fill="#3c3"/><rect x="16.500" y="12" width="3" height="1.500" fill="#e08030"/></svg>
<div class="t m" style="left:1379px;top:399px;font-size:15px;transform:scaleX(.8333);transform-origin:0 0">[0] KV-5500</div>
<div style="left:1098px;top:420px;width:346px;height:140px;background:#fff"></div>
<div style="left:1098px;top:420px;width:346px;height:25px;background:#d8d8d0"></div>
<div style="left:1098px;top:420px;width:20px;height:140px;background:#d8d8d0"></div>
<svg style="left:1104px;top:427px;" width="11" height="11" viewBox="0 0 11 11" preserveAspectRatio="none"><rect x="0.500" y="0.500" width="10" height="10" fill="none" stroke="#555"/><path d="M2.500 5.500h6" stroke="#333" stroke-width="1"/></svg>
<div class="t" style="left:1121px;top:423.5px;font-size:16px;color:#000;letter-spacing:-0.2px;font-weight:bold">基本</div>
<div style="left:1118px;top:445px;width:161px;height:23px;background:#dedede"></div>
<div class="t" style="left:1125px;top:449.5px;font-size:15px;color:#000;letter-spacing:-0.2px;">首<span style="display:inline-block;width:7.5px"></span><span class="m" style="display:inline-block;font-size:15px;transform:scaleX(.8333);transform-origin:0 50%;margin-right:-3.00px;letter-spacing:0">DM</span><span style="display:inline-block;width:7.5px"></span>编号</div>
<div class="t" style="left:1287px;top:448.5px;font-size:15px;color:#000;letter-spacing:-0.2px;"><span class="m" style="display:inline-block;font-size:15px;transform:scaleX(.8333);transform-origin:0 50%;margin-right:-10.50px;letter-spacing:0">DM10000</span></div>
<div class="t" style="left:1125px;top:473.5px;font-size:15px;color:#8a8a8a;letter-spacing:-0.2px;">占用<span style="display:inline-block;width:7.5px"></span><span class="m" style="display:inline-block;font-size:15px;transform:scaleX(.8333);transform-origin:0 50%;margin-right:-3.00px;letter-spacing:0">DM</span><span style="display:inline-block;width:7.5px"></span>数</div>
<div class="t" style="left:1287px;top:472.5px;font-size:15px;color:#8a8a8a;letter-spacing:-0.2px;"><span class="m" style="display:inline-block;font-size:15px;transform:scaleX(.8333);transform-origin:0 50%;margin-right:-4.50px;letter-spacing:0">230</span></div>
<div style="left:1118px;top:468px;width:326px;height:1px;background:#e6e6da"></div>
<div class="t" style="left:1125px;top:497.0px;font-size:15px;color:#000;letter-spacing:-0.2px;">首继电器编号<span class="m" style="display:inline-block;font-size:15px;transform:scaleX(.8333);transform-origin:0 50%;margin-right:-1.50px;letter-spacing:0">(</span>按<span class="m" style="display:inline-block;font-size:15px;transform:scaleX(.8333);transform-origin:0 50%;margin-right:-4.50px;letter-spacing:0">...</span></div>
<div class="t" style="left:1287px;top:496.0px;font-size:15px;color:#000;letter-spacing:-0.2px;"><span class="m" style="display:inline-block;font-size:15px;transform:scaleX(.8333);transform-origin:0 50%;margin-right:-9.00px;letter-spacing:0">R30000</span></div>
<div style="left:1118px;top:491px;width:326px;height:1px;background:#e6e6da"></div>
<div class="t" style="left:1125px;top:521.0px;font-size:15px;color:#8a8a8a;letter-spacing:-0.2px;">占用继电器数</div>
<div class="t" style="left:1287px;top:520.0px;font-size:15px;color:#8a8a8a;letter-spacing:-0.2px;"><span class="m" style="display:inline-block;font-size:15px;transform:scaleX(.8333);transform-origin:0 50%;margin-right:-4.50px;letter-spacing:0">640</span></div>
<div style="left:1118px;top:515px;width:326px;height:1px;background:#e6e6da"></div>
<div class="t" style="left:1125px;top:543.0px;font-size:15px;color:#000;letter-spacing:-0.2px;">通信速度</div>
<div class="t" style="left:1287px;top:542.0px;font-size:15px;color:#000;letter-spacing:-0.2px;"><span class="m" style="display:inline-block;font-size:15px;transform:scaleX(.8333);transform-origin:0 50%;margin-right:-15.00px;letter-spacing:0">100/10Mbps</span>自动（<span class="m" style="display:inline-block;font-size:15px;transform:scaleX(.8333);transform-origin:0 50%;margin-right:-1.50px;letter-spacing:0">*</span>）</div>
<div style="left:1118px;top:539px;width:326px;height:1px;background:#e6e6da"></div>
<div style="left:1279px;top:445px;width:1px;height:115px;background:#e6e6da"></div>
<div style="left:1445px;top:420px;width:20px;height:140px;background:#f0f0f0"></div>
<div style="left:1446px;top:444px;width:18px;height:18px;background:#cdcdcd"></div>
<svg style="left:1449px;top:428px;" width="11" height="7" viewBox="0 0 11 7" preserveAspectRatio="none"><path d="M1 6l4.500-4.500 4.500 4.500" stroke="#505050" stroke-width="1.800" fill="none"/></svg>
<svg style="left:1449px;top:546px;" width="11" height="7" viewBox="0 0 11 7" preserveAspectRatio="none"><path d="M1 1l4.500 4.500 4.500-4.500" stroke="#505050" stroke-width="1.800" fill="none"/></svg>
<div style="left:1098px;top:567px;width:366px;height:1px;background:#c8c8c8"></div>
<div class="t" style="left:1106px;top:570.0px;font-size:15px;color:#000;letter-spacing:-0.2px;font-weight:bold">首<span style="display:inline-block;width:7.5px"></span><span class="m" style="display:inline-block;font-size:15px;transform:scaleX(.8333);transform-origin:0 50%;margin-right:-3.00px;letter-spacing:0">DM</span><span style="display:inline-block;width:7.5px"></span>编号</div>
<div class="t" style="left:1106px;top:588.25px;font-size:14.5px;color:#000;letter-spacing:-0.2px;">设定分配到该单元的数据存储器<span class="m" style="display:inline-block;font-size:14.5px;transform:scaleX(.8333);transform-origin:0 50%;margin-right:-5.80px;letter-spacing:0">(DM)</span>的首编号。</div>
<div style="left:614px;top:673px;width:855px;height:31px;background:#f0f0f0;border:1px solid #b4b4b4;border-left:none;border-right:none"></div>
<div style="left:614px;top:671px;width:855px;height:2px;background:#fafafa"></div>
<div class="t" style="left:619px;top:681.0px;font-size:15px;color:#000;">消息</div>
<svg style="left:1452px;top:684px;" width="10" height="12" viewBox="0 0 10 12" preserveAspectRatio="none"><path d="M2.500 1h5M3.500 1v5.500M6.500 1v5.500M1 6.500h8M5 6.500v5" stroke="#000" stroke-width="1.300" fill="none"/><path d="M5.500 1.500h1.500v5h-1.500z" fill="#000"/></svg>
<div style="left:619px;top:709px;width:848px;height:135px;background:#fff;border:2px solid #8c8c8c;border-right:1px solid #d0d0d0;border-bottom:2px solid #3c3c3c"></div>
<div style="left:621px;top:712px;width:841px;height:22px;background:#f0f0f0;border:1px solid #a0a0a0"></div>
<div style="left:700px;top:713px;width:1px;height:20px;background:#a0a0a0"></div>
<div style="left:780px;top:713px;width:1px;height:20px;background:#a0a0a0"></div>
<div style="left:860px;top:713px;width:1px;height:20px;background:#a0a0a0"></div>
<div style="left:940px;top:713px;width:1px;height:20px;background:#a0a0a0"></div>
<div style="left:1020px;top:713px;width:1px;height:20px;background:#a0a0a0"></div>
<div style="left:1100px;top:713px;width:1px;height:20px;background:#a0a0a0"></div>
<div class="t" style="left:701px;width:80px;text-align:center;top:716px;font-size:15px">处理</div>
<div class="t" style="left:781px;width:80px;text-align:center;top:716px;font-size:15px">行</div>
<div class="t" style="left:861px;width:80px;text-align:center;top:716px;font-size:15px">编号</div>
<div class="t" style="left:941px;width:80px;text-align:center;top:716px;font-size:15px">代码</div>
<div class="t" style="left:1021px;width:80px;text-align:center;top:716px;font-size:15px">消息</div>
<svg style="left:622px;top:850px;" width="75" height="12" viewBox="0 0 75 12" preserveAspectRatio="none"><path d="M1 1v10" stroke="#000" stroke-width="1.600"/><path d="M8 1v10l-6-5z" fill="#000"/><path d="M29 1v10l-6-5z" fill="#000"/><path d="M42 1v10l6-5z" fill="#000"/><path d="M62 1v10l6-5z" fill="#000"/><path d="M69.500 1v10" stroke="#000" stroke-width="1.600"/></svg>
<svg style="left:698px;top:843px;" width="64" height="26" viewBox="0 0 64 26" preserveAspectRatio="none"><path d="M0 1h5l9 23h33l12-23h5" fill="#fff" stroke="none"/><path d="M2 1l11 23h33l12-23" fill="#fff" stroke="#222" stroke-width="1.200"/></svg>
<div class="t" style="left:713px;top:847.0px;font-size:15px;color:#000;font-weight:bold">消息</div>
<div style="left:1056px;top:846px;width:5px;height:22px;background:#f0f0f0;border:1px solid #7a7a7a"></div>
<svg style="left:1067px;top:851px;" width="8" height="11" viewBox="0 0 8 11" preserveAspectRatio="none"><path d="M7 1l-5 4.500 5 4.500" stroke="#c0c0c0" stroke-width="1.800" fill="none"/></svg>
<svg style="left:1428px;top:851px;" width="8" height="11" viewBox="0 0 8 11" preserveAspectRatio="none"><path d="M1 1l5 4.500-5 4.500" stroke="#c0c0c0" stroke-width="1.800" fill="none"/></svg>
<div style="left:614px;top:870px;width:855px;height:1px;background:#fbfbfb"></div>
<div class="t" style="left:615px;top:880.0px;font-size:15px;color:#000;letter-spacing:-0.3px">由于没有错误, 因此不能跳跃。</div>
<div style="left:985px;top:876px;width:80px;height:25px;background:#f0f0f0;border:1px solid #c4c4c4"></div>
<div class="t" style="left:988px;top:880.0px;font-size:15px;color:#000;">编辑器</div>
<div style="left:1068px;top:876px;width:104px;height:25px;background:#f0f0f0;border:1px solid #c4c4c4"></div>
<div class="t" style="left:1071px;top:880.0px;font-size:15px;color:#000;word-spacing:2.3px">1 行, 1 列</div>
<div style="left:1177px;top:877px;width:82px;height:24px;background:#e1e1e1;border:1px solid #adadad"></div>
<div class="t" style="left:1177px;width:82px;text-align:center;top:880px;font-size:16px;color:#000">OK</div>
<div style="left:1265px;top:877px;width:83px;height:24px;background:#e1e1e1;border:1px solid #adadad"></div>
<div class="t" style="left:1265px;width:83px;text-align:center;top:880px;font-size:16px;color:#000">取消</div>
<div style="left:1354px;top:877px;width:84px;height:24px;background:#cccccc;border:1px solid #bfbfbf"></div>
<div class="t" style="left:1354px;width:84px;text-align:center;top:880px;font-size:16px;color:#8a8a8a">应用</div>
<div style="left:1442px;top:877px;width:4px;height:24px;background:#f0f0f0;border:1px solid #b0b0b0"></div>
<svg style="left:1455px;top:888px;" width="14" height="14" viewBox="0 0 14 14" preserveAspectRatio="none"><path d="M1 13l12-12M5 13l8-8M9 13l4-4" stroke="#b8b8b8" stroke-width="1"/></svg>
</body></html>
